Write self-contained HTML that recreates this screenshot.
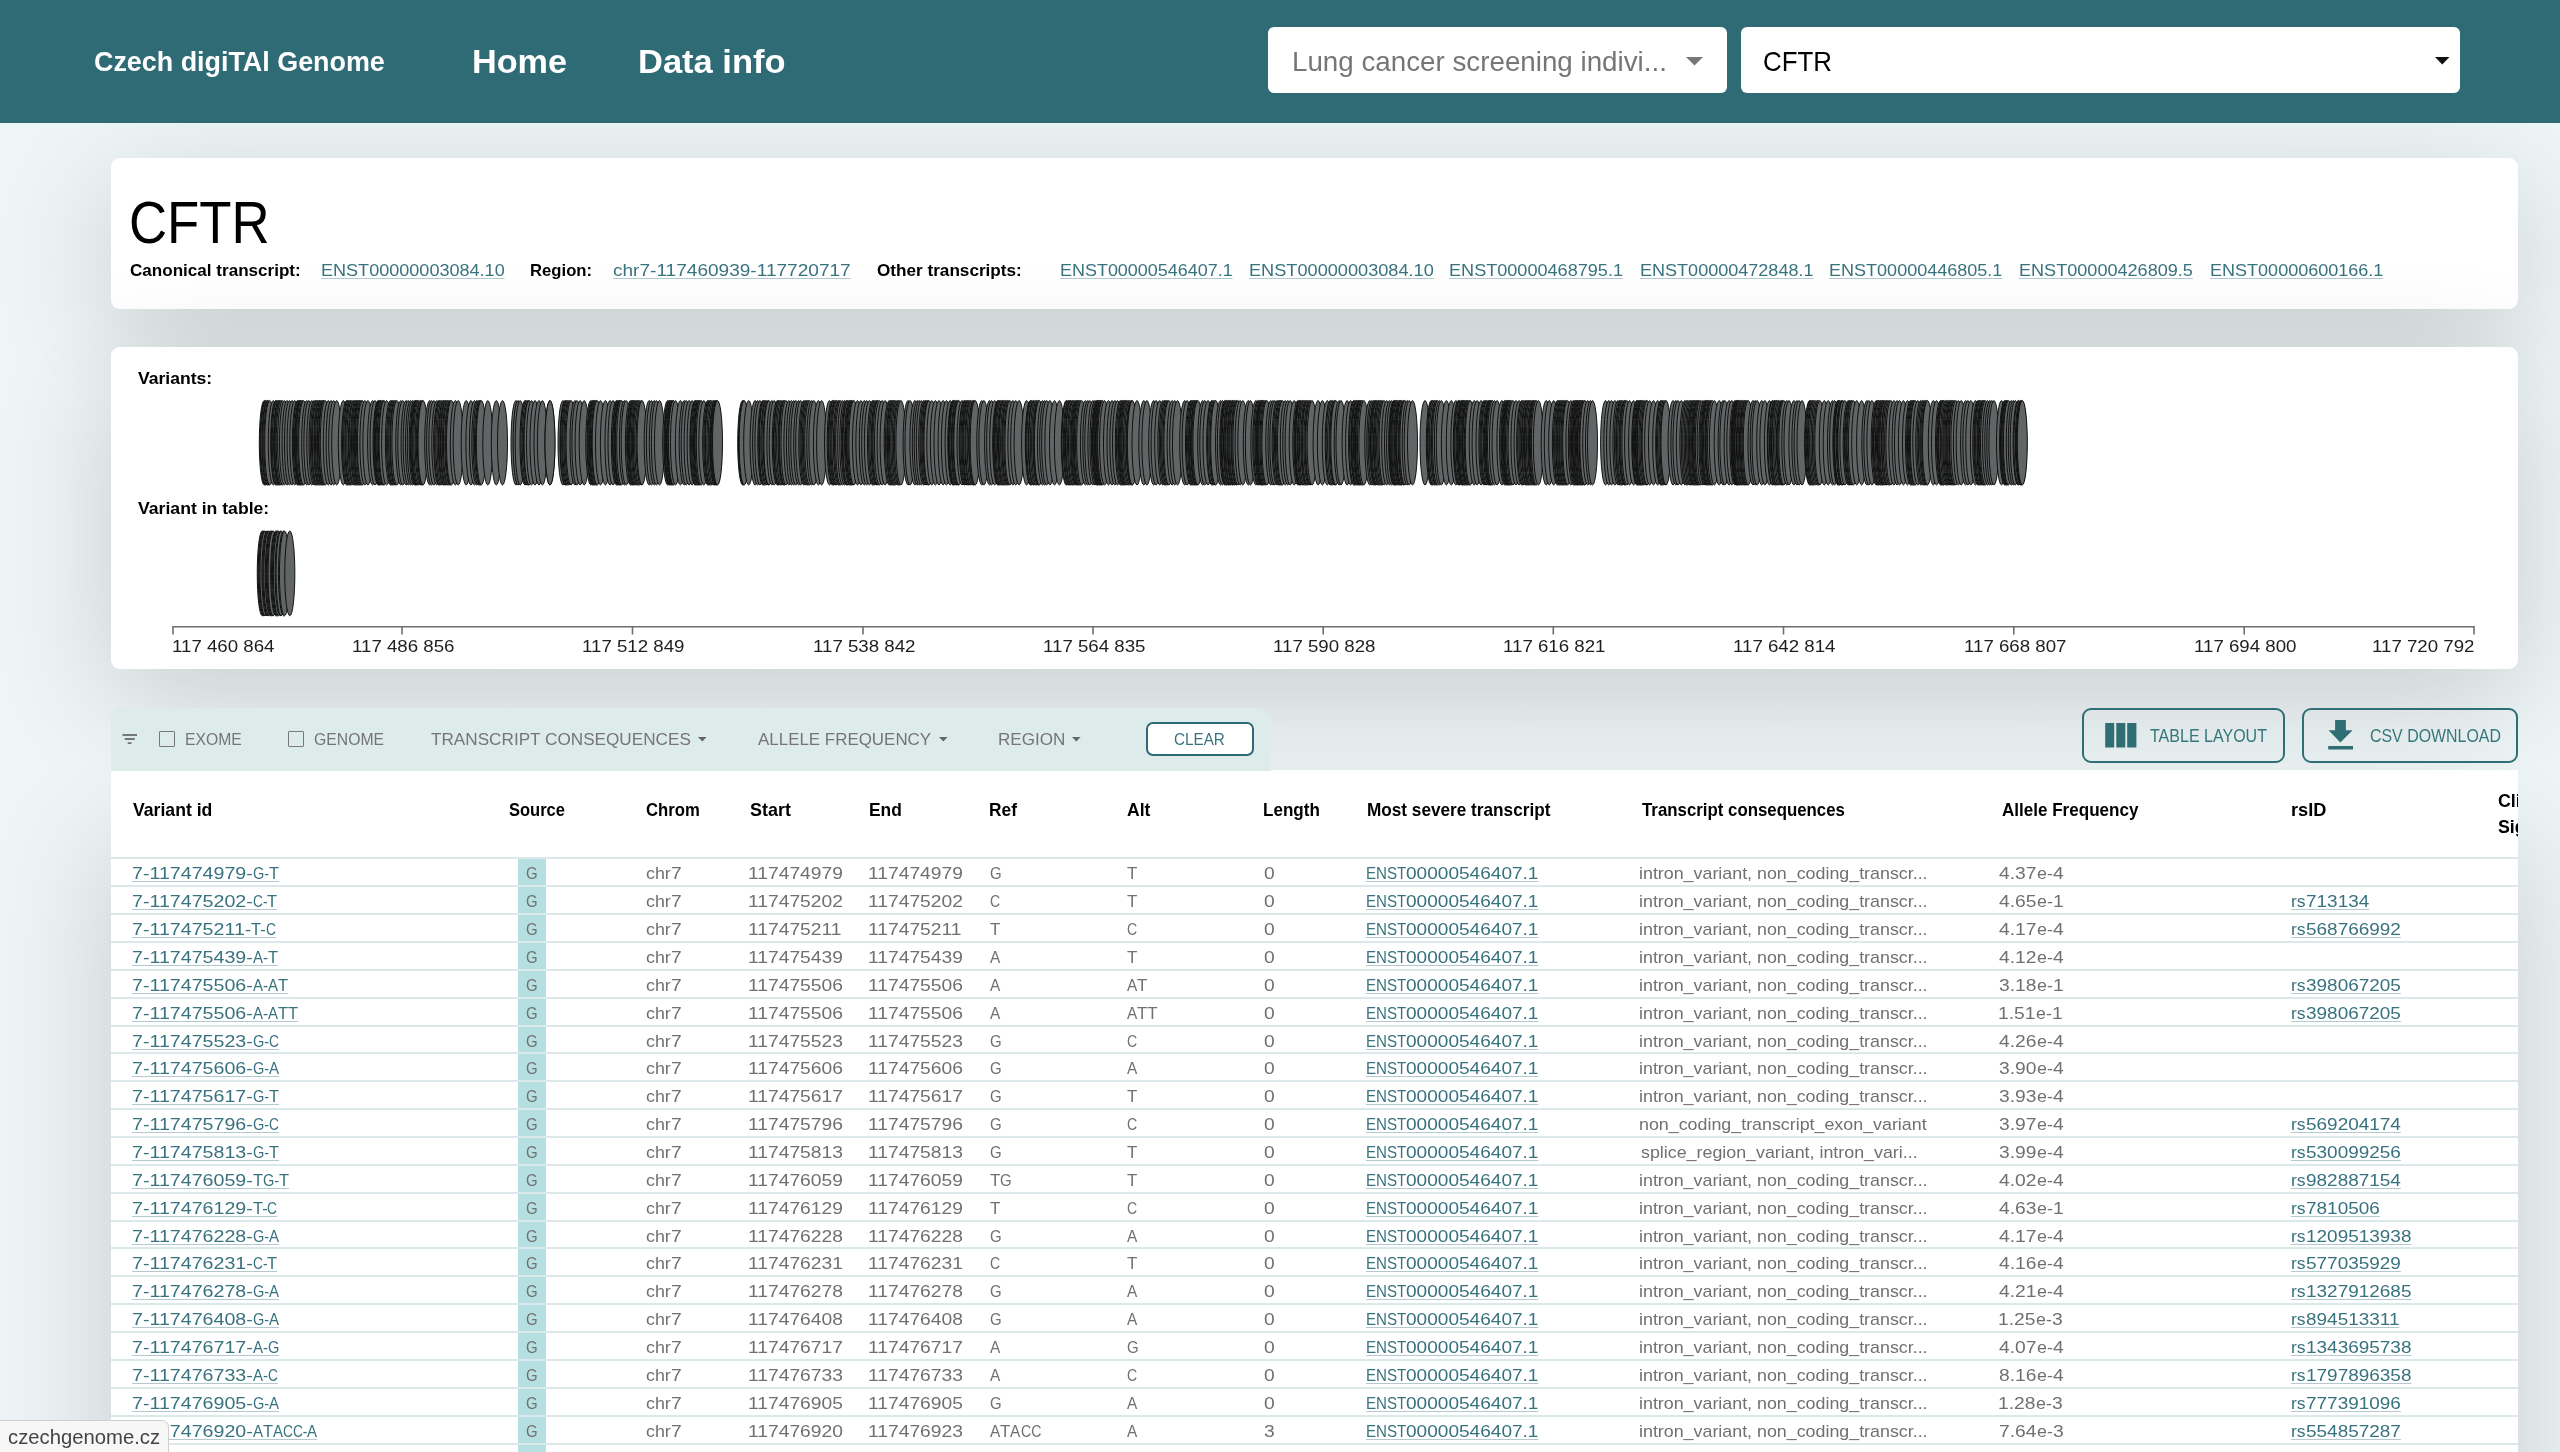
<!DOCTYPE html>
<html lang="en"><head><meta charset="utf-8"><title>Czech digiTAl Genome - CFTR</title>
<style>
*{box-sizing:border-box;margin:0;padding:0}
html,body{width:2560px;height:1452px;overflow:hidden}
html{background:#eef5f7}
body{font-family:"Liberation Sans",sans-serif;position:relative;will-change:transform}
.t{position:absolute;white-space:nowrap;line-height:1;transform-origin:0 0;display:block;text-decoration:none}
.u{text-decoration:underline;text-decoration-color:#b2cacf;text-decoration-thickness:1px;text-underline-offset:1.8px}
.abs{position:absolute}
header{position:absolute;left:0;top:0;width:2560px;height:122.6px;background:#2f6b75;z-index:5}
.sel{position:absolute;top:27px;height:66px;background:#fff;border-radius:6px}
.card{position:absolute;left:111px;width:2407px;background:#fff;border-radius:9px;box-shadow:0 30px 120px rgba(0,0,0,.16)}
.fbar{position:absolute;left:111px;top:707.5px;width:1160px;height:63px;background:#deebeb;border-radius:9px 16px 0 0;z-index:2}
.tbl{position:absolute;left:111px;top:770px;width:2407px;height:900px;background:#fff;box-shadow:0 70px 120px rgba(0,0,0,.16);overflow:hidden}
.btn{position:absolute;top:708px;height:55px;border:2px solid #2f6e74;border-radius:9px;z-index:2}
.cb{position:absolute;top:731px;width:16px;height:16px;border:1.7px solid #787878;border-radius:1px}
.rl{position:absolute;left:0;width:2407px;height:2px;background:#dce9ea}
.g{position:absolute;left:407px;width:28px;background:#b6dfe2}
.tip{position:absolute;left:-1px;top:1420px;width:170px;height:40px;background:#f7f7f7;border:1px solid #cfcfcf;border-radius:0 7px 0 0;z-index:10}
</style></head><body>

<main>
<section class="card" style="top:158px;height:151px">
</section>
<section class="card" style="top:347.3px;height:322px">
</section>
<section class="tbl"></section>
</main>
<header>
<span class="t" style="left:93.85px;top:46.90px;font-size:28.4px;color:#fff;font-weight:700;transform:scaleX(0.9470);">Czech digiTAl Genome</span>
<span class="t" style="left:471.97px;top:45.10px;font-size:33.8px;color:#fff;font-weight:700;transform:scaleX(1.0126);">Home</span>
<span class="t" style="left:637.66px;top:45.10px;font-size:33.8px;color:#fff;font-weight:700;transform:scaleX(1.0202);">Data info</span>
<div class="sel" style="left:1268px;width:458.7px">
<svg class="abs" style="left:417.5px;top:29.7px" width="17" height="9" viewBox="0 0 17 9"><path d="M0 0h17L8.5 8.5z" fill="#777"/></svg>
</div>
<div class="sel" style="left:1741.2px;width:719.3px">
<svg class="abs" style="left:694px;top:29.7px" width="14.5" height="8" viewBox="0 0 14.5 8"><path d="M0 0h14.5L7.25 7.6z" fill="#111"/></svg>
</div>
<span class="t" style="left:1291.71px;top:47.75px;font-size:27.2px;color:#767676;transform:scaleX(1.0208);">Lung cancer screening indivi...</span>
<span class="t" style="left:1762.80px;top:47.75px;font-size:27.2px;color:#000;transform:scaleX(0.9527);">CFTR</span>
</header>
<div id="gene">
<span class="t" style="left:129.45px;top:194.25px;font-size:58.7px;color:#000;transform:scaleX(0.8992);">CFTR</span>
<span class="t" style="left:130.00px;top:262.00px;font-size:17.3px;color:#000;font-weight:700;transform:scaleX(0.9878);">Canonical transcript:</span>
<a class="t u" style="left:320.71px;top:262.00px;font-size:17.3px;color:#38727e;transform:scaleX(1.0446);">ENST00000003084.10</a>
<span class="t" style="left:530.29px;top:262.00px;font-size:17.3px;color:#000;font-weight:700;transform:scaleX(0.9647);">Region:</span>
<a class="t u" style="left:613.00px;top:262.00px;font-size:17.3px;color:#38727e;transform:scaleX(1.1026);">chr7-117460939-117720717</a>
<span class="t" style="left:877.00px;top:262.00px;font-size:17.3px;color:#000;font-weight:700;transform:scaleX(0.9917);">Other transcripts:</span>
<a class="t u" style="left:1059.96px;top:262.00px;font-size:17.3px;color:#38727e;transform:scaleX(1.0388);">ENST00000546407.1</a>
<a class="t u" style="left:1249.25px;top:262.00px;font-size:17.3px;color:#38727e;transform:scaleX(1.0510);">ENST00000003084.10</a>
<a class="t u" style="left:1449.35px;top:262.00px;font-size:17.3px;color:#38727e;transform:scaleX(1.0467);">ENST00000468795.1</a>
<a class="t u" style="left:1639.66px;top:262.00px;font-size:17.3px;color:#38727e;transform:scaleX(1.0437);">ENST00000472848.1</a>
<a class="t u" style="left:1829.46px;top:262.00px;font-size:17.3px;color:#38727e;transform:scaleX(1.0431);">ENST00000446805.1</a>
<a class="t u" style="left:2019.25px;top:262.00px;font-size:17.3px;color:#38727e;transform:scaleX(1.0461);">ENST00000426809.5</a>
<a class="t u" style="left:2209.56px;top:262.00px;font-size:17.3px;color:#38727e;transform:scaleX(1.0431);">ENST00000600166.1</a>
</div>
<div id="plot">
<span class="t" style="left:138.30px;top:369.50px;font-size:16.2px;color:#000;font-weight:700;transform:scaleX(1.0853);">Variants:</span>
<span class="t" style="left:138.30px;top:500.20px;font-size:16.2px;color:#000;font-weight:700;transform:scaleX(1.0886);">Variant in table:</span>
<svg class="abs" style="left:0;top:340px" width="2560" height="330" viewBox="0 340 2560 330"><g fill="#626566" stroke="#0c0c0c" stroke-width=".95"><ellipse cx="264.3" cy="442.8" rx="5" ry="42.2"/><ellipse cx="265.2" cy="442.8" rx="5" ry="42.2"/><ellipse cx="265.9" cy="442.8" rx="5" ry="42.2"/><ellipse cx="267.1" cy="442.8" rx="5" ry="42.2"/><ellipse cx="267.7" cy="442.8" rx="5" ry="42.2"/><ellipse cx="268.8" cy="442.8" rx="5" ry="42.2"/><ellipse cx="269.7" cy="442.8" rx="5" ry="42.2"/><ellipse cx="273.3" cy="442.8" rx="5" ry="42.2"/><ellipse cx="275.7" cy="442.8" rx="5" ry="42.2"/><ellipse cx="276.3" cy="442.8" rx="5" ry="42.2"/><ellipse cx="277.3" cy="442.8" rx="5" ry="42.2"/><ellipse cx="278.6" cy="442.8" rx="5" ry="42.2"/><ellipse cx="279.3" cy="442.8" rx="5" ry="42.2"/><ellipse cx="280.1" cy="442.8" rx="5" ry="42.2"/><ellipse cx="281.2" cy="442.8" rx="5" ry="42.2"/><ellipse cx="282.6" cy="442.8" rx="5" ry="42.2"/><ellipse cx="284.5" cy="442.8" rx="5" ry="42.2"/><ellipse cx="287.1" cy="442.8" rx="5" ry="42.2"/><ellipse cx="289.5" cy="442.8" rx="5" ry="42.2"/><ellipse cx="292.1" cy="442.8" rx="5" ry="42.2"/><ellipse cx="294.8" cy="442.8" rx="5" ry="42.2"/><ellipse cx="297.4" cy="442.8" rx="5" ry="42.2"/><ellipse cx="298.3" cy="442.8" rx="5" ry="42.2"/><ellipse cx="299.4" cy="442.8" rx="5" ry="42.2"/><ellipse cx="300.1" cy="442.8" rx="5" ry="42.2"/><ellipse cx="300.7" cy="442.8" rx="5" ry="42.2"/><ellipse cx="301.5" cy="442.8" rx="5" ry="42.2"/><ellipse cx="302.7" cy="442.8" rx="5" ry="42.2"/><ellipse cx="303.6" cy="442.8" rx="5" ry="42.2"/><ellipse cx="306.7" cy="442.8" rx="5" ry="42.2"/><ellipse cx="308.9" cy="442.8" rx="5" ry="42.2"/><ellipse cx="311.8" cy="442.8" rx="5" ry="42.2"/><ellipse cx="314.0" cy="442.8" rx="5" ry="42.2"/><ellipse cx="315.3" cy="442.8" rx="5" ry="42.2"/><ellipse cx="316.5" cy="442.8" rx="5" ry="42.2"/><ellipse cx="317.4" cy="442.8" rx="5" ry="42.2"/><ellipse cx="318.8" cy="442.8" rx="5" ry="42.2"/><ellipse cx="319.5" cy="442.8" rx="5" ry="42.2"/><ellipse cx="320.5" cy="442.8" rx="5" ry="42.2"/><ellipse cx="321.7" cy="442.8" rx="5" ry="42.2"/><ellipse cx="322.4" cy="442.8" rx="5" ry="42.2"/><ellipse cx="323.5" cy="442.8" rx="5" ry="42.2"/><ellipse cx="324.1" cy="442.8" rx="5" ry="42.2"/><ellipse cx="325.3" cy="442.8" rx="5" ry="42.2"/><ellipse cx="328.3" cy="442.8" rx="5" ry="42.2"/><ellipse cx="331.1" cy="442.8" rx="5" ry="42.2"/><ellipse cx="333.7" cy="442.8" rx="5" ry="42.2"/><ellipse cx="336.7" cy="442.8" rx="5" ry="42.2"/><ellipse cx="343.3" cy="442.8" rx="5" ry="42.2"/><ellipse cx="346.6" cy="442.8" rx="5" ry="42.2"/><ellipse cx="347.5" cy="442.8" rx="5" ry="42.2"/><ellipse cx="348.6" cy="442.8" rx="5" ry="42.2"/><ellipse cx="349.8" cy="442.8" rx="5" ry="42.2"/><ellipse cx="350.7" cy="442.8" rx="5" ry="42.2"/><ellipse cx="351.9" cy="442.8" rx="5" ry="42.2"/><ellipse cx="353.3" cy="442.8" rx="5" ry="42.2"/><ellipse cx="354.2" cy="442.8" rx="5" ry="42.2"/><ellipse cx="355.6" cy="442.8" rx="5" ry="42.2"/><ellipse cx="356.5" cy="442.8" rx="5" ry="42.2"/><ellipse cx="357.6" cy="442.8" rx="5" ry="42.2"/><ellipse cx="358.6" cy="442.8" rx="5" ry="42.2"/><ellipse cx="359.4" cy="442.8" rx="5" ry="42.2"/><ellipse cx="360.3" cy="442.8" rx="5" ry="42.2"/><ellipse cx="361.5" cy="442.8" rx="5" ry="42.2"/><ellipse cx="362.4" cy="442.8" rx="5" ry="42.2"/><ellipse cx="364.9" cy="442.8" rx="5" ry="42.2"/><ellipse cx="367.9" cy="442.8" rx="5" ry="42.2"/><ellipse cx="372.6" cy="442.8" rx="5" ry="42.2"/><ellipse cx="375.0" cy="442.8" rx="5" ry="42.2"/><ellipse cx="378.1" cy="442.8" rx="5" ry="42.2"/><ellipse cx="378.8" cy="442.8" rx="5" ry="42.2"/><ellipse cx="379.5" cy="442.8" rx="5" ry="42.2"/><ellipse cx="380.3" cy="442.8" rx="5" ry="42.2"/><ellipse cx="381.1" cy="442.8" rx="5" ry="42.2"/><ellipse cx="382.2" cy="442.8" rx="5" ry="42.2"/><ellipse cx="383.3" cy="442.8" rx="5" ry="42.2"/><ellipse cx="384.1" cy="442.8" rx="5" ry="42.2"/><ellipse cx="386.6" cy="442.8" rx="5" ry="42.2"/><ellipse cx="390.4" cy="442.8" rx="5" ry="42.2"/><ellipse cx="391.6" cy="442.8" rx="5" ry="42.2"/><ellipse cx="392.6" cy="442.8" rx="5" ry="42.2"/><ellipse cx="393.7" cy="442.8" rx="5" ry="42.2"/><ellipse cx="394.9" cy="442.8" rx="5" ry="42.2"/><ellipse cx="395.6" cy="442.8" rx="5" ry="42.2"/><ellipse cx="396.9" cy="442.8" rx="5" ry="42.2"/><ellipse cx="400.8" cy="442.8" rx="5" ry="42.2"/><ellipse cx="402.8" cy="442.8" rx="5" ry="42.2"/><ellipse cx="406.1" cy="442.8" rx="5" ry="42.2"/><ellipse cx="408.2" cy="442.8" rx="5" ry="42.2"/><ellipse cx="410.5" cy="442.8" rx="5" ry="42.2"/><ellipse cx="412.3" cy="442.8" rx="5" ry="42.2"/><ellipse cx="414.2" cy="442.8" rx="5" ry="42.2"/><ellipse cx="415.3" cy="442.8" rx="5" ry="42.2"/><ellipse cx="416.0" cy="442.8" rx="5" ry="42.2"/><ellipse cx="416.8" cy="442.8" rx="5" ry="42.2"/><ellipse cx="417.7" cy="442.8" rx="5" ry="42.2"/><ellipse cx="418.8" cy="442.8" rx="5" ry="42.2"/><ellipse cx="420.2" cy="442.8" rx="5" ry="42.2"/><ellipse cx="421.3" cy="442.8" rx="5" ry="42.2"/><ellipse cx="422.4" cy="442.8" rx="5" ry="42.2"/><ellipse cx="423.0" cy="442.8" rx="5" ry="42.2"/><ellipse cx="429.7" cy="442.8" rx="5" ry="42.2"/><ellipse cx="431.6" cy="442.8" rx="5" ry="42.2"/><ellipse cx="433.9" cy="442.8" rx="5" ry="42.2"/><ellipse cx="436.8" cy="442.8" rx="5" ry="42.2"/><ellipse cx="438.7" cy="442.8" rx="5" ry="42.2"/><ellipse cx="439.6" cy="442.8" rx="5" ry="42.2"/><ellipse cx="440.8" cy="442.8" rx="5" ry="42.2"/><ellipse cx="442.1" cy="442.8" rx="5" ry="42.2"/><ellipse cx="443.4" cy="442.8" rx="5" ry="42.2"/><ellipse cx="444.2" cy="442.8" rx="5" ry="42.2"/><ellipse cx="445.4" cy="442.8" rx="5" ry="42.2"/><ellipse cx="446.1" cy="442.8" rx="5" ry="42.2"/><ellipse cx="447.4" cy="442.8" rx="5" ry="42.2"/><ellipse cx="448.4" cy="442.8" rx="5" ry="42.2"/><ellipse cx="449.8" cy="442.8" rx="5" ry="42.2"/><ellipse cx="450.7" cy="442.8" rx="5" ry="42.2"/><ellipse cx="451.5" cy="442.8" rx="5" ry="42.2"/><ellipse cx="455.3" cy="442.8" rx="5" ry="42.2"/><ellipse cx="458.2" cy="442.8" rx="5" ry="42.2"/><ellipse cx="466.2" cy="442.8" rx="5" ry="42.2"/><ellipse cx="470.9" cy="442.8" rx="5" ry="42.2"/><ellipse cx="474.5" cy="442.8" rx="5" ry="42.2"/><ellipse cx="476.8" cy="442.8" rx="5" ry="42.2"/><ellipse cx="478.2" cy="442.8" rx="5" ry="42.2"/><ellipse cx="479.5" cy="442.8" rx="5" ry="42.2"/><ellipse cx="480.5" cy="442.8" rx="5" ry="42.2"/><ellipse cx="481.3" cy="442.8" rx="5" ry="42.2"/><ellipse cx="487.8" cy="442.8" rx="5" ry="42.2"/><ellipse cx="496.3" cy="442.8" rx="5" ry="42.2"/><ellipse cx="502.5" cy="442.8" rx="5" ry="42.2"/><ellipse cx="516.0" cy="442.8" rx="5" ry="42.2"/><ellipse cx="518.1" cy="442.8" rx="5" ry="42.2"/><ellipse cx="520.2" cy="442.8" rx="5" ry="42.2"/><ellipse cx="525.0" cy="442.8" rx="5" ry="42.2"/><ellipse cx="526.0" cy="442.8" rx="5" ry="42.2"/><ellipse cx="527.2" cy="442.8" rx="5" ry="42.2"/><ellipse cx="528.5" cy="442.8" rx="5" ry="42.2"/><ellipse cx="529.1" cy="442.8" rx="5" ry="42.2"/><ellipse cx="531.5" cy="442.8" rx="5" ry="42.2"/><ellipse cx="535.0" cy="442.8" rx="5" ry="42.2"/><ellipse cx="539.0" cy="442.8" rx="5" ry="42.2"/><ellipse cx="542.4" cy="442.8" rx="5" ry="42.2"/><ellipse cx="549.9" cy="442.8" rx="5" ry="42.2"/><ellipse cx="550.0" cy="442.8" rx="5" ry="42.2"/><ellipse cx="563.0" cy="442.8" rx="5" ry="42.2"/><ellipse cx="565.0" cy="442.8" rx="5" ry="42.2"/><ellipse cx="565.6" cy="442.8" rx="5" ry="42.2"/><ellipse cx="566.7" cy="442.8" rx="5" ry="42.2"/><ellipse cx="567.7" cy="442.8" rx="5" ry="42.2"/><ellipse cx="568.9" cy="442.8" rx="5" ry="42.2"/><ellipse cx="570.0" cy="442.8" rx="5" ry="42.2"/><ellipse cx="571.1" cy="442.8" rx="5" ry="42.2"/><ellipse cx="575.0" cy="442.8" rx="5" ry="42.2"/><ellipse cx="576.9" cy="442.8" rx="5" ry="42.2"/><ellipse cx="580.1" cy="442.8" rx="5" ry="42.2"/><ellipse cx="584.2" cy="442.8" rx="5" ry="42.2"/><ellipse cx="590.8" cy="442.8" rx="5" ry="42.2"/><ellipse cx="592.1" cy="442.8" rx="5" ry="42.2"/><ellipse cx="592.8" cy="442.8" rx="5" ry="42.2"/><ellipse cx="593.7" cy="442.8" rx="5" ry="42.2"/><ellipse cx="594.5" cy="442.8" rx="5" ry="42.2"/><ellipse cx="595.3" cy="442.8" rx="5" ry="42.2"/><ellipse cx="596.4" cy="442.8" rx="5" ry="42.2"/><ellipse cx="597.2" cy="442.8" rx="5" ry="42.2"/><ellipse cx="600.5" cy="442.8" rx="5" ry="42.2"/><ellipse cx="605.4" cy="442.8" rx="5" ry="42.2"/><ellipse cx="610.0" cy="442.8" rx="5" ry="42.2"/><ellipse cx="613.0" cy="442.8" rx="5" ry="42.2"/><ellipse cx="616.4" cy="442.8" rx="5" ry="42.2"/><ellipse cx="617.5" cy="442.8" rx="5" ry="42.2"/><ellipse cx="618.1" cy="442.8" rx="5" ry="42.2"/><ellipse cx="619.1" cy="442.8" rx="5" ry="42.2"/><ellipse cx="619.8" cy="442.8" rx="5" ry="42.2"/><ellipse cx="620.4" cy="442.8" rx="5" ry="42.2"/><ellipse cx="621.7" cy="442.8" rx="5" ry="42.2"/><ellipse cx="624.4" cy="442.8" rx="5" ry="42.2"/><ellipse cx="626.2" cy="442.8" rx="5" ry="42.2"/><ellipse cx="630.4" cy="442.8" rx="5" ry="42.2"/><ellipse cx="631.7" cy="442.8" rx="5" ry="42.2"/><ellipse cx="632.4" cy="442.8" rx="5" ry="42.2"/><ellipse cx="633.4" cy="442.8" rx="5" ry="42.2"/><ellipse cx="634.2" cy="442.8" rx="5" ry="42.2"/><ellipse cx="635.1" cy="442.8" rx="5" ry="42.2"/><ellipse cx="636.3" cy="442.8" rx="5" ry="42.2"/><ellipse cx="637.4" cy="442.8" rx="5" ry="42.2"/><ellipse cx="638.4" cy="442.8" rx="5" ry="42.2"/><ellipse cx="639.7" cy="442.8" rx="5" ry="42.2"/><ellipse cx="641.1" cy="442.8" rx="5" ry="42.2"/><ellipse cx="642.0" cy="442.8" rx="5" ry="42.2"/><ellipse cx="649.2" cy="442.8" rx="5" ry="42.2"/><ellipse cx="651.4" cy="442.8" rx="5" ry="42.2"/><ellipse cx="654.3" cy="442.8" rx="5" ry="42.2"/><ellipse cx="656.4" cy="442.8" rx="5" ry="42.2"/><ellipse cx="659.5" cy="442.8" rx="5" ry="42.2"/><ellipse cx="667.7" cy="442.8" rx="5" ry="42.2"/><ellipse cx="669.0" cy="442.8" rx="5" ry="42.2"/><ellipse cx="669.7" cy="442.8" rx="5" ry="42.2"/><ellipse cx="670.4" cy="442.8" rx="5" ry="42.2"/><ellipse cx="671.4" cy="442.8" rx="5" ry="42.2"/><ellipse cx="672.1" cy="442.8" rx="5" ry="42.2"/><ellipse cx="672.9" cy="442.8" rx="5" ry="42.2"/><ellipse cx="673.5" cy="442.8" rx="5" ry="42.2"/><ellipse cx="675.5" cy="442.8" rx="5" ry="42.2"/><ellipse cx="680.4" cy="442.8" rx="5" ry="42.2"/><ellipse cx="684.2" cy="442.8" rx="5" ry="42.2"/><ellipse cx="686.2" cy="442.8" rx="5" ry="42.2"/><ellipse cx="689.1" cy="442.8" rx="5" ry="42.2"/><ellipse cx="692.1" cy="442.8" rx="5" ry="42.2"/><ellipse cx="694.9" cy="442.8" rx="5" ry="42.2"/><ellipse cx="695.6" cy="442.8" rx="5" ry="42.2"/><ellipse cx="696.6" cy="442.8" rx="5" ry="42.2"/><ellipse cx="697.6" cy="442.8" rx="5" ry="42.2"/><ellipse cx="698.5" cy="442.8" rx="5" ry="42.2"/><ellipse cx="699.3" cy="442.8" rx="5" ry="42.2"/><ellipse cx="700.1" cy="442.8" rx="5" ry="42.2"/><ellipse cx="701.3" cy="442.8" rx="5" ry="42.2"/><ellipse cx="703.8" cy="442.8" rx="5" ry="42.2"/><ellipse cx="707.7" cy="442.8" rx="5" ry="42.2"/><ellipse cx="708.8" cy="442.8" rx="5" ry="42.2"/><ellipse cx="709.8" cy="442.8" rx="5" ry="42.2"/><ellipse cx="710.5" cy="442.8" rx="5" ry="42.2"/><ellipse cx="711.9" cy="442.8" rx="5" ry="42.2"/><ellipse cx="713.2" cy="442.8" rx="5" ry="42.2"/><ellipse cx="714.6" cy="442.8" rx="5" ry="42.2"/><ellipse cx="715.3" cy="442.8" rx="5" ry="42.2"/><ellipse cx="716.1" cy="442.8" rx="5" ry="42.2"/><ellipse cx="716.8" cy="442.8" rx="5" ry="42.2"/><ellipse cx="717.5" cy="442.8" rx="5" ry="42.2"/><ellipse cx="742.7" cy="442.8" rx="5" ry="42.2"/><ellipse cx="743.5" cy="442.8" rx="5" ry="42.2"/><ellipse cx="744.2" cy="442.8" rx="5" ry="42.2"/><ellipse cx="748.7" cy="442.8" rx="5" ry="42.2"/><ellipse cx="755.1" cy="442.8" rx="5" ry="42.2"/><ellipse cx="757.6" cy="442.8" rx="5" ry="42.2"/><ellipse cx="759.9" cy="442.8" rx="5" ry="42.2"/><ellipse cx="762.8" cy="442.8" rx="5" ry="42.2"/><ellipse cx="763.7" cy="442.8" rx="5" ry="42.2"/><ellipse cx="764.4" cy="442.8" rx="5" ry="42.2"/><ellipse cx="765.8" cy="442.8" rx="5" ry="42.2"/><ellipse cx="766.9" cy="442.8" rx="5" ry="42.2"/><ellipse cx="768.2" cy="442.8" rx="5" ry="42.2"/><ellipse cx="768.9" cy="442.8" rx="5" ry="42.2"/><ellipse cx="771.9" cy="442.8" rx="5" ry="42.2"/><ellipse cx="774.2" cy="442.8" rx="5" ry="42.2"/><ellipse cx="777.3" cy="442.8" rx="5" ry="42.2"/><ellipse cx="778.4" cy="442.8" rx="5" ry="42.2"/><ellipse cx="779.0" cy="442.8" rx="5" ry="42.2"/><ellipse cx="780.2" cy="442.8" rx="5" ry="42.2"/><ellipse cx="781.6" cy="442.8" rx="5" ry="42.2"/><ellipse cx="783.1" cy="442.8" rx="5" ry="42.2"/><ellipse cx="783.9" cy="442.8" rx="5" ry="42.2"/><ellipse cx="784.6" cy="442.8" rx="5" ry="42.2"/><ellipse cx="786.0" cy="442.8" rx="5" ry="42.2"/><ellipse cx="788.9" cy="442.8" rx="5" ry="42.2"/><ellipse cx="791.4" cy="442.8" rx="5" ry="42.2"/><ellipse cx="793.7" cy="442.8" rx="5" ry="42.2"/><ellipse cx="795.8" cy="442.8" rx="5" ry="42.2"/><ellipse cx="798.7" cy="442.8" rx="5" ry="42.2"/><ellipse cx="800.7" cy="442.8" rx="5" ry="42.2"/><ellipse cx="803.8" cy="442.8" rx="5" ry="42.2"/><ellipse cx="805.0" cy="442.8" rx="5" ry="42.2"/><ellipse cx="806.1" cy="442.8" rx="5" ry="42.2"/><ellipse cx="807.3" cy="442.8" rx="5" ry="42.2"/><ellipse cx="808.4" cy="442.8" rx="5" ry="42.2"/><ellipse cx="809.7" cy="442.8" rx="5" ry="42.2"/><ellipse cx="811.8" cy="442.8" rx="5" ry="42.2"/><ellipse cx="813.9" cy="442.8" rx="5" ry="42.2"/><ellipse cx="818.4" cy="442.8" rx="5" ry="42.2"/><ellipse cx="821.6" cy="442.8" rx="5" ry="42.2"/><ellipse cx="829.5" cy="442.8" rx="5" ry="42.2"/><ellipse cx="832.2" cy="442.8" rx="5" ry="42.2"/><ellipse cx="833.2" cy="442.8" rx="5" ry="42.2"/><ellipse cx="833.8" cy="442.8" rx="5" ry="42.2"/><ellipse cx="835.0" cy="442.8" rx="5" ry="42.2"/><ellipse cx="835.9" cy="442.8" rx="5" ry="42.2"/><ellipse cx="836.9" cy="442.8" rx="5" ry="42.2"/><ellipse cx="838.4" cy="442.8" rx="5" ry="42.2"/><ellipse cx="839.5" cy="442.8" rx="5" ry="42.2"/><ellipse cx="840.7" cy="442.8" rx="5" ry="42.2"/><ellipse cx="842.7" cy="442.8" rx="5" ry="42.2"/><ellipse cx="844.8" cy="442.8" rx="5" ry="42.2"/><ellipse cx="846.3" cy="442.8" rx="5" ry="42.2"/><ellipse cx="847.3" cy="442.8" rx="5" ry="42.2"/><ellipse cx="848.1" cy="442.8" rx="5" ry="42.2"/><ellipse cx="849.6" cy="442.8" rx="5" ry="42.2"/><ellipse cx="850.4" cy="442.8" rx="5" ry="42.2"/><ellipse cx="851.3" cy="442.8" rx="5" ry="42.2"/><ellipse cx="851.9" cy="442.8" rx="5" ry="42.2"/><ellipse cx="852.9" cy="442.8" rx="5" ry="42.2"/><ellipse cx="853.9" cy="442.8" rx="5" ry="42.2"/><ellipse cx="857.5" cy="442.8" rx="5" ry="42.2"/><ellipse cx="860.9" cy="442.8" rx="5" ry="42.2"/><ellipse cx="864.3" cy="442.8" rx="5" ry="42.2"/><ellipse cx="866.7" cy="442.8" rx="5" ry="42.2"/><ellipse cx="869.4" cy="442.8" rx="5" ry="42.2"/><ellipse cx="872.5" cy="442.8" rx="5" ry="42.2"/><ellipse cx="873.7" cy="442.8" rx="5" ry="42.2"/><ellipse cx="874.9" cy="442.8" rx="5" ry="42.2"/><ellipse cx="876.2" cy="442.8" rx="5" ry="42.2"/><ellipse cx="877.1" cy="442.8" rx="5" ry="42.2"/><ellipse cx="878.0" cy="442.8" rx="5" ry="42.2"/><ellipse cx="879.5" cy="442.8" rx="5" ry="42.2"/><ellipse cx="882.1" cy="442.8" rx="5" ry="42.2"/><ellipse cx="885.1" cy="442.8" rx="5" ry="42.2"/><ellipse cx="889.2" cy="442.8" rx="5" ry="42.2"/><ellipse cx="890.4" cy="442.8" rx="5" ry="42.2"/><ellipse cx="891.7" cy="442.8" rx="5" ry="42.2"/><ellipse cx="892.4" cy="442.8" rx="5" ry="42.2"/><ellipse cx="893.5" cy="442.8" rx="5" ry="42.2"/><ellipse cx="894.5" cy="442.8" rx="5" ry="42.2"/><ellipse cx="895.8" cy="442.8" rx="5" ry="42.2"/><ellipse cx="897.1" cy="442.8" rx="5" ry="42.2"/><ellipse cx="898.4" cy="442.8" rx="5" ry="42.2"/><ellipse cx="899.5" cy="442.8" rx="5" ry="42.2"/><ellipse cx="900.9" cy="442.8" rx="5" ry="42.2"/><ellipse cx="908.1" cy="442.8" rx="5" ry="42.2"/><ellipse cx="910.0" cy="442.8" rx="5" ry="42.2"/><ellipse cx="914.9" cy="442.8" rx="5" ry="42.2"/><ellipse cx="917.3" cy="442.8" rx="5" ry="42.2"/><ellipse cx="919.2" cy="442.8" rx="5" ry="42.2"/><ellipse cx="921.3" cy="442.8" rx="5" ry="42.2"/><ellipse cx="923.7" cy="442.8" rx="5" ry="42.2"/><ellipse cx="925.0" cy="442.8" rx="5" ry="42.2"/><ellipse cx="926.0" cy="442.8" rx="5" ry="42.2"/><ellipse cx="927.1" cy="442.8" rx="5" ry="42.2"/><ellipse cx="928.2" cy="442.8" rx="5" ry="42.2"/><ellipse cx="928.9" cy="442.8" rx="5" ry="42.2"/><ellipse cx="931.8" cy="442.8" rx="5" ry="42.2"/><ellipse cx="935.4" cy="442.8" rx="5" ry="42.2"/><ellipse cx="939.0" cy="442.8" rx="5" ry="42.2"/><ellipse cx="943.1" cy="442.8" rx="5" ry="42.2"/><ellipse cx="946.4" cy="442.8" rx="5" ry="42.2"/><ellipse cx="950.1" cy="442.8" rx="5" ry="42.2"/><ellipse cx="952.8" cy="442.8" rx="5" ry="42.2"/><ellipse cx="953.5" cy="442.8" rx="5" ry="42.2"/><ellipse cx="954.2" cy="442.8" rx="5" ry="42.2"/><ellipse cx="955.0" cy="442.8" rx="5" ry="42.2"/><ellipse cx="956.3" cy="442.8" rx="5" ry="42.2"/><ellipse cx="957.1" cy="442.8" rx="5" ry="42.2"/><ellipse cx="958.2" cy="442.8" rx="5" ry="42.2"/><ellipse cx="958.8" cy="442.8" rx="5" ry="42.2"/><ellipse cx="962.0" cy="442.8" rx="5" ry="42.2"/><ellipse cx="964.1" cy="442.8" rx="5" ry="42.2"/><ellipse cx="964.9" cy="442.8" rx="5" ry="42.2"/><ellipse cx="966.0" cy="442.8" rx="5" ry="42.2"/><ellipse cx="967.0" cy="442.8" rx="5" ry="42.2"/><ellipse cx="967.9" cy="442.8" rx="5" ry="42.2"/><ellipse cx="968.7" cy="442.8" rx="5" ry="42.2"/><ellipse cx="970.0" cy="442.8" rx="5" ry="42.2"/><ellipse cx="970.8" cy="442.8" rx="5" ry="42.2"/><ellipse cx="972.2" cy="442.8" rx="5" ry="42.2"/><ellipse cx="973.6" cy="442.8" rx="5" ry="42.2"/><ellipse cx="974.2" cy="442.8" rx="5" ry="42.2"/><ellipse cx="975.2" cy="442.8" rx="5" ry="42.2"/><ellipse cx="981.8" cy="442.8" rx="5" ry="42.2"/><ellipse cx="983.9" cy="442.8" rx="5" ry="42.2"/><ellipse cx="989.6" cy="442.8" rx="5" ry="42.2"/><ellipse cx="991.6" cy="442.8" rx="5" ry="42.2"/><ellipse cx="994.7" cy="442.8" rx="5" ry="42.2"/><ellipse cx="997.7" cy="442.8" rx="5" ry="42.2"/><ellipse cx="998.5" cy="442.8" rx="5" ry="42.2"/><ellipse cx="999.2" cy="442.8" rx="5" ry="42.2"/><ellipse cx="1000.1" cy="442.8" rx="5" ry="42.2"/><ellipse cx="1001.2" cy="442.8" rx="5" ry="42.2"/><ellipse cx="1002.5" cy="442.8" rx="5" ry="42.2"/><ellipse cx="1003.4" cy="442.8" rx="5" ry="42.2"/><ellipse cx="1004.2" cy="442.8" rx="5" ry="42.2"/><ellipse cx="1005.6" cy="442.8" rx="5" ry="42.2"/><ellipse cx="1006.8" cy="442.8" rx="5" ry="42.2"/><ellipse cx="1007.7" cy="442.8" rx="5" ry="42.2"/><ellipse cx="1008.9" cy="442.8" rx="5" ry="42.2"/><ellipse cx="1009.9" cy="442.8" rx="5" ry="42.2"/><ellipse cx="1012.9" cy="442.8" rx="5" ry="42.2"/><ellipse cx="1015.7" cy="442.8" rx="5" ry="42.2"/><ellipse cx="1019.1" cy="442.8" rx="5" ry="42.2"/><ellipse cx="1026.6" cy="442.8" rx="5" ry="42.2"/><ellipse cx="1030.3" cy="442.8" rx="5" ry="42.2"/><ellipse cx="1031.0" cy="442.8" rx="5" ry="42.2"/><ellipse cx="1031.9" cy="442.8" rx="5" ry="42.2"/><ellipse cx="1033.3" cy="442.8" rx="5" ry="42.2"/><ellipse cx="1033.9" cy="442.8" rx="5" ry="42.2"/><ellipse cx="1035.3" cy="442.8" rx="5" ry="42.2"/><ellipse cx="1036.6" cy="442.8" rx="5" ry="42.2"/><ellipse cx="1037.9" cy="442.8" rx="5" ry="42.2"/><ellipse cx="1038.7" cy="442.8" rx="5" ry="42.2"/><ellipse cx="1039.4" cy="442.8" rx="5" ry="42.2"/><ellipse cx="1042.5" cy="442.8" rx="5" ry="42.2"/><ellipse cx="1044.7" cy="442.8" rx="5" ry="42.2"/><ellipse cx="1046.7" cy="442.8" rx="5" ry="42.2"/><ellipse cx="1049.9" cy="442.8" rx="5" ry="42.2"/><ellipse cx="1054.5" cy="442.8" rx="5" ry="42.2"/><ellipse cx="1059.4" cy="442.8" rx="5" ry="42.2"/><ellipse cx="1066.3" cy="442.8" rx="5" ry="42.2"/><ellipse cx="1067.0" cy="442.8" rx="5" ry="42.2"/><ellipse cx="1068.3" cy="442.8" rx="5" ry="42.2"/><ellipse cx="1069.3" cy="442.8" rx="5" ry="42.2"/><ellipse cx="1070.4" cy="442.8" rx="5" ry="42.2"/><ellipse cx="1071.1" cy="442.8" rx="5" ry="42.2"/><ellipse cx="1072.5" cy="442.8" rx="5" ry="42.2"/><ellipse cx="1073.5" cy="442.8" rx="5" ry="42.2"/><ellipse cx="1074.9" cy="442.8" rx="5" ry="42.2"/><ellipse cx="1075.9" cy="442.8" rx="5" ry="42.2"/><ellipse cx="1076.7" cy="442.8" rx="5" ry="42.2"/><ellipse cx="1077.6" cy="442.8" rx="5" ry="42.2"/><ellipse cx="1078.5" cy="442.8" rx="5" ry="42.2"/><ellipse cx="1079.3" cy="442.8" rx="5" ry="42.2"/><ellipse cx="1080.5" cy="442.8" rx="5" ry="42.2"/><ellipse cx="1081.7" cy="442.8" rx="5" ry="42.2"/><ellipse cx="1085.4" cy="442.8" rx="5" ry="42.2"/><ellipse cx="1087.8" cy="442.8" rx="5" ry="42.2"/><ellipse cx="1089.8" cy="442.8" rx="5" ry="42.2"/><ellipse cx="1092.9" cy="442.8" rx="5" ry="42.2"/><ellipse cx="1095.0" cy="442.8" rx="5" ry="42.2"/><ellipse cx="1096.4" cy="442.8" rx="5" ry="42.2"/><ellipse cx="1097.4" cy="442.8" rx="5" ry="42.2"/><ellipse cx="1098.1" cy="442.8" rx="5" ry="42.2"/><ellipse cx="1098.9" cy="442.8" rx="5" ry="42.2"/><ellipse cx="1099.6" cy="442.8" rx="5" ry="42.2"/><ellipse cx="1100.4" cy="442.8" rx="5" ry="42.2"/><ellipse cx="1101.1" cy="442.8" rx="5" ry="42.2"/><ellipse cx="1101.9" cy="442.8" rx="5" ry="42.2"/><ellipse cx="1102.7" cy="442.8" rx="5" ry="42.2"/><ellipse cx="1104.6" cy="442.8" rx="5" ry="42.2"/><ellipse cx="1108.5" cy="442.8" rx="5" ry="42.2"/><ellipse cx="1112.0" cy="442.8" rx="5" ry="42.2"/><ellipse cx="1114.9" cy="442.8" rx="5" ry="42.2"/><ellipse cx="1117.5" cy="442.8" rx="5" ry="42.2"/><ellipse cx="1120.3" cy="442.8" rx="5" ry="42.2"/><ellipse cx="1121.4" cy="442.8" rx="5" ry="42.2"/><ellipse cx="1122.7" cy="442.8" rx="5" ry="42.2"/><ellipse cx="1123.5" cy="442.8" rx="5" ry="42.2"/><ellipse cx="1124.3" cy="442.8" rx="5" ry="42.2"/><ellipse cx="1125.2" cy="442.8" rx="5" ry="42.2"/><ellipse cx="1126.1" cy="442.8" rx="5" ry="42.2"/><ellipse cx="1127.1" cy="442.8" rx="5" ry="42.2"/><ellipse cx="1128.5" cy="442.8" rx="5" ry="42.2"/><ellipse cx="1129.8" cy="442.8" rx="5" ry="42.2"/><ellipse cx="1131.1" cy="442.8" rx="5" ry="42.2"/><ellipse cx="1131.8" cy="442.8" rx="5" ry="42.2"/><ellipse cx="1132.4" cy="442.8" rx="5" ry="42.2"/><ellipse cx="1137.0" cy="442.8" rx="5" ry="42.2"/><ellipse cx="1143.8" cy="442.8" rx="5" ry="42.2"/><ellipse cx="1146.9" cy="442.8" rx="5" ry="42.2"/><ellipse cx="1153.7" cy="442.8" rx="5" ry="42.2"/><ellipse cx="1156.1" cy="442.8" rx="5" ry="42.2"/><ellipse cx="1159.7" cy="442.8" rx="5" ry="42.2"/><ellipse cx="1162.9" cy="442.8" rx="5" ry="42.2"/><ellipse cx="1164.3" cy="442.8" rx="5" ry="42.2"/><ellipse cx="1165.5" cy="442.8" rx="5" ry="42.2"/><ellipse cx="1166.7" cy="442.8" rx="5" ry="42.2"/><ellipse cx="1167.9" cy="442.8" rx="5" ry="42.2"/><ellipse cx="1168.9" cy="442.8" rx="5" ry="42.2"/><ellipse cx="1172.1" cy="442.8" rx="5" ry="42.2"/><ellipse cx="1174.7" cy="442.8" rx="5" ry="42.2"/><ellipse cx="1177.5" cy="442.8" rx="5" ry="42.2"/><ellipse cx="1184.7" cy="442.8" rx="5" ry="42.2"/><ellipse cx="1187.1" cy="442.8" rx="5" ry="42.2"/><ellipse cx="1190.5" cy="442.8" rx="5" ry="42.2"/><ellipse cx="1191.5" cy="442.8" rx="5" ry="42.2"/><ellipse cx="1192.6" cy="442.8" rx="5" ry="42.2"/><ellipse cx="1193.6" cy="442.8" rx="5" ry="42.2"/><ellipse cx="1194.3" cy="442.8" rx="5" ry="42.2"/><ellipse cx="1195.5" cy="442.8" rx="5" ry="42.2"/><ellipse cx="1196.1" cy="442.8" rx="5" ry="42.2"/><ellipse cx="1196.9" cy="442.8" rx="5" ry="42.2"/><ellipse cx="1197.9" cy="442.8" rx="5" ry="42.2"/><ellipse cx="1202.7" cy="442.8" rx="5" ry="42.2"/><ellipse cx="1204.8" cy="442.8" rx="5" ry="42.2"/><ellipse cx="1208.0" cy="442.8" rx="5" ry="42.2"/><ellipse cx="1211.7" cy="442.8" rx="5" ry="42.2"/><ellipse cx="1212.5" cy="442.8" rx="5" ry="42.2"/><ellipse cx="1213.8" cy="442.8" rx="5" ry="42.2"/><ellipse cx="1215.0" cy="442.8" rx="5" ry="42.2"/><ellipse cx="1215.7" cy="442.8" rx="5" ry="42.2"/><ellipse cx="1220.5" cy="442.8" rx="5" ry="42.2"/><ellipse cx="1222.4" cy="442.8" rx="5" ry="42.2"/><ellipse cx="1224.8" cy="442.8" rx="5" ry="42.2"/><ellipse cx="1225.7" cy="442.8" rx="5" ry="42.2"/><ellipse cx="1226.3" cy="442.8" rx="5" ry="42.2"/><ellipse cx="1227.2" cy="442.8" rx="5" ry="42.2"/><ellipse cx="1228.5" cy="442.8" rx="5" ry="42.2"/><ellipse cx="1229.1" cy="442.8" rx="5" ry="42.2"/><ellipse cx="1230.2" cy="442.8" rx="5" ry="42.2"/><ellipse cx="1230.9" cy="442.8" rx="5" ry="42.2"/><ellipse cx="1232.2" cy="442.8" rx="5" ry="42.2"/><ellipse cx="1232.9" cy="442.8" rx="5" ry="42.2"/><ellipse cx="1233.9" cy="442.8" rx="5" ry="42.2"/><ellipse cx="1234.8" cy="442.8" rx="5" ry="42.2"/><ellipse cx="1236.1" cy="442.8" rx="5" ry="42.2"/><ellipse cx="1236.8" cy="442.8" rx="5" ry="42.2"/><ellipse cx="1237.9" cy="442.8" rx="5" ry="42.2"/><ellipse cx="1240.1" cy="442.8" rx="5" ry="42.2"/><ellipse cx="1242.8" cy="442.8" rx="5" ry="42.2"/><ellipse cx="1248.3" cy="442.8" rx="5" ry="42.2"/><ellipse cx="1250.4" cy="442.8" rx="5" ry="42.2"/><ellipse cx="1255.9" cy="442.8" rx="5" ry="42.2"/><ellipse cx="1257.8" cy="442.8" rx="5" ry="42.2"/><ellipse cx="1258.8" cy="442.8" rx="5" ry="42.2"/><ellipse cx="1260.0" cy="442.8" rx="5" ry="42.2"/><ellipse cx="1260.8" cy="442.8" rx="5" ry="42.2"/><ellipse cx="1261.5" cy="442.8" rx="5" ry="42.2"/><ellipse cx="1262.2" cy="442.8" rx="5" ry="42.2"/><ellipse cx="1262.9" cy="442.8" rx="5" ry="42.2"/><ellipse cx="1263.7" cy="442.8" rx="5" ry="42.2"/><ellipse cx="1264.9" cy="442.8" rx="5" ry="42.2"/><ellipse cx="1265.9" cy="442.8" rx="5" ry="42.2"/><ellipse cx="1266.9" cy="442.8" rx="5" ry="42.2"/><ellipse cx="1270.8" cy="442.8" rx="5" ry="42.2"/><ellipse cx="1273.0" cy="442.8" rx="5" ry="42.2"/><ellipse cx="1274.8" cy="442.8" rx="5" ry="42.2"/><ellipse cx="1277.1" cy="442.8" rx="5" ry="42.2"/><ellipse cx="1278.2" cy="442.8" rx="5" ry="42.2"/><ellipse cx="1279.5" cy="442.8" rx="5" ry="42.2"/><ellipse cx="1280.4" cy="442.8" rx="5" ry="42.2"/><ellipse cx="1281.6" cy="442.8" rx="5" ry="42.2"/><ellipse cx="1282.5" cy="442.8" rx="5" ry="42.2"/><ellipse cx="1285.3" cy="442.8" rx="5" ry="42.2"/><ellipse cx="1287.8" cy="442.8" rx="5" ry="42.2"/><ellipse cx="1290.1" cy="442.8" rx="5" ry="42.2"/><ellipse cx="1294.2" cy="442.8" rx="5" ry="42.2"/><ellipse cx="1297.8" cy="442.8" rx="5" ry="42.2"/><ellipse cx="1299.0" cy="442.8" rx="5" ry="42.2"/><ellipse cx="1299.7" cy="442.8" rx="5" ry="42.2"/><ellipse cx="1300.3" cy="442.8" rx="5" ry="42.2"/><ellipse cx="1301.0" cy="442.8" rx="5" ry="42.2"/><ellipse cx="1302.3" cy="442.8" rx="5" ry="42.2"/><ellipse cx="1303.2" cy="442.8" rx="5" ry="42.2"/><ellipse cx="1304.4" cy="442.8" rx="5" ry="42.2"/><ellipse cx="1305.8" cy="442.8" rx="5" ry="42.2"/><ellipse cx="1306.7" cy="442.8" rx="5" ry="42.2"/><ellipse cx="1307.5" cy="442.8" rx="5" ry="42.2"/><ellipse cx="1308.9" cy="442.8" rx="5" ry="42.2"/><ellipse cx="1310.0" cy="442.8" rx="5" ry="42.2"/><ellipse cx="1310.8" cy="442.8" rx="5" ry="42.2"/><ellipse cx="1312.1" cy="442.8" rx="5" ry="42.2"/><ellipse cx="1318.1" cy="442.8" rx="5" ry="42.2"/><ellipse cx="1322.4" cy="442.8" rx="5" ry="42.2"/><ellipse cx="1327.3" cy="442.8" rx="5" ry="42.2"/><ellipse cx="1330.2" cy="442.8" rx="5" ry="42.2"/><ellipse cx="1331.2" cy="442.8" rx="5" ry="42.2"/><ellipse cx="1332.6" cy="442.8" rx="5" ry="42.2"/><ellipse cx="1334.1" cy="442.8" rx="5" ry="42.2"/><ellipse cx="1335.0" cy="442.8" rx="5" ry="42.2"/><ellipse cx="1335.8" cy="442.8" rx="5" ry="42.2"/><ellipse cx="1339.2" cy="442.8" rx="5" ry="42.2"/><ellipse cx="1341.0" cy="442.8" rx="5" ry="42.2"/><ellipse cx="1347.1" cy="442.8" rx="5" ry="42.2"/><ellipse cx="1350.6" cy="442.8" rx="5" ry="42.2"/><ellipse cx="1353.6" cy="442.8" rx="5" ry="42.2"/><ellipse cx="1354.5" cy="442.8" rx="5" ry="42.2"/><ellipse cx="1355.8" cy="442.8" rx="5" ry="42.2"/><ellipse cx="1356.4" cy="442.8" rx="5" ry="42.2"/><ellipse cx="1357.2" cy="442.8" rx="5" ry="42.2"/><ellipse cx="1358.4" cy="442.8" rx="5" ry="42.2"/><ellipse cx="1359.2" cy="442.8" rx="5" ry="42.2"/><ellipse cx="1359.9" cy="442.8" rx="5" ry="42.2"/><ellipse cx="1360.5" cy="442.8" rx="5" ry="42.2"/><ellipse cx="1361.6" cy="442.8" rx="5" ry="42.2"/><ellipse cx="1362.5" cy="442.8" rx="5" ry="42.2"/><ellipse cx="1363.9" cy="442.8" rx="5" ry="42.2"/><ellipse cx="1369.8" cy="442.8" rx="5" ry="42.2"/><ellipse cx="1371.8" cy="442.8" rx="5" ry="42.2"/><ellipse cx="1373.2" cy="442.8" rx="5" ry="42.2"/><ellipse cx="1374.6" cy="442.8" rx="5" ry="42.2"/><ellipse cx="1375.4" cy="442.8" rx="5" ry="42.2"/><ellipse cx="1376.1" cy="442.8" rx="5" ry="42.2"/><ellipse cx="1377.1" cy="442.8" rx="5" ry="42.2"/><ellipse cx="1378.4" cy="442.8" rx="5" ry="42.2"/><ellipse cx="1379.2" cy="442.8" rx="5" ry="42.2"/><ellipse cx="1380.3" cy="442.8" rx="5" ry="42.2"/><ellipse cx="1381.6" cy="442.8" rx="5" ry="42.2"/><ellipse cx="1382.8" cy="442.8" rx="5" ry="42.2"/><ellipse cx="1384.1" cy="442.8" rx="5" ry="42.2"/><ellipse cx="1386.7" cy="442.8" rx="5" ry="42.2"/><ellipse cx="1389.5" cy="442.8" rx="5" ry="42.2"/><ellipse cx="1391.6" cy="442.8" rx="5" ry="42.2"/><ellipse cx="1393.7" cy="442.8" rx="5" ry="42.2"/><ellipse cx="1394.4" cy="442.8" rx="5" ry="42.2"/><ellipse cx="1395.1" cy="442.8" rx="5" ry="42.2"/><ellipse cx="1395.9" cy="442.8" rx="5" ry="42.2"/><ellipse cx="1396.7" cy="442.8" rx="5" ry="42.2"/><ellipse cx="1397.7" cy="442.8" rx="5" ry="42.2"/><ellipse cx="1398.9" cy="442.8" rx="5" ry="42.2"/><ellipse cx="1399.6" cy="442.8" rx="5" ry="42.2"/><ellipse cx="1400.6" cy="442.8" rx="5" ry="42.2"/><ellipse cx="1401.2" cy="442.8" rx="5" ry="42.2"/><ellipse cx="1401.8" cy="442.8" rx="5" ry="42.2"/><ellipse cx="1403.2" cy="442.8" rx="5" ry="42.2"/><ellipse cx="1404.0" cy="442.8" rx="5" ry="42.2"/><ellipse cx="1404.9" cy="442.8" rx="5" ry="42.2"/><ellipse cx="1407.2" cy="442.8" rx="5" ry="42.2"/><ellipse cx="1409.2" cy="442.8" rx="5" ry="42.2"/><ellipse cx="1412.5" cy="442.8" rx="5" ry="42.2"/><ellipse cx="1425.0" cy="442.8" rx="5" ry="42.2"/><ellipse cx="1431.3" cy="442.8" rx="5" ry="42.2"/><ellipse cx="1432.3" cy="442.8" rx="5" ry="42.2"/><ellipse cx="1433.1" cy="442.8" rx="5" ry="42.2"/><ellipse cx="1434.4" cy="442.8" rx="5" ry="42.2"/><ellipse cx="1435.8" cy="442.8" rx="5" ry="42.2"/><ellipse cx="1436.5" cy="442.8" rx="5" ry="42.2"/><ellipse cx="1437.6" cy="442.8" rx="5" ry="42.2"/><ellipse cx="1439.4" cy="442.8" rx="5" ry="42.2"/><ellipse cx="1441.3" cy="442.8" rx="5" ry="42.2"/><ellipse cx="1446.4" cy="442.8" rx="5" ry="42.2"/><ellipse cx="1451.3" cy="442.8" rx="5" ry="42.2"/><ellipse cx="1455.9" cy="442.8" rx="5" ry="42.2"/><ellipse cx="1458.3" cy="442.8" rx="5" ry="42.2"/><ellipse cx="1459.1" cy="442.8" rx="5" ry="42.2"/><ellipse cx="1459.9" cy="442.8" rx="5" ry="42.2"/><ellipse cx="1461.2" cy="442.8" rx="5" ry="42.2"/><ellipse cx="1462.2" cy="442.8" rx="5" ry="42.2"/><ellipse cx="1462.9" cy="442.8" rx="5" ry="42.2"/><ellipse cx="1463.6" cy="442.8" rx="5" ry="42.2"/><ellipse cx="1464.5" cy="442.8" rx="5" ry="42.2"/><ellipse cx="1465.6" cy="442.8" rx="5" ry="42.2"/><ellipse cx="1466.7" cy="442.8" rx="5" ry="42.2"/><ellipse cx="1467.4" cy="442.8" rx="5" ry="42.2"/><ellipse cx="1468.1" cy="442.8" rx="5" ry="42.2"/><ellipse cx="1469.3" cy="442.8" rx="5" ry="42.2"/><ellipse cx="1470.3" cy="442.8" rx="5" ry="42.2"/><ellipse cx="1474.2" cy="442.8" rx="5" ry="42.2"/><ellipse cx="1477.1" cy="442.8" rx="5" ry="42.2"/><ellipse cx="1481.0" cy="442.8" rx="5" ry="42.2"/><ellipse cx="1483.9" cy="442.8" rx="5" ry="42.2"/><ellipse cx="1485.0" cy="442.8" rx="5" ry="42.2"/><ellipse cx="1486.0" cy="442.8" rx="5" ry="42.2"/><ellipse cx="1486.9" cy="442.8" rx="5" ry="42.2"/><ellipse cx="1488.3" cy="442.8" rx="5" ry="42.2"/><ellipse cx="1489.3" cy="442.8" rx="5" ry="42.2"/><ellipse cx="1490.0" cy="442.8" rx="5" ry="42.2"/><ellipse cx="1490.7" cy="442.8" rx="5" ry="42.2"/><ellipse cx="1491.4" cy="442.8" rx="5" ry="42.2"/><ellipse cx="1492.5" cy="442.8" rx="5" ry="42.2"/><ellipse cx="1494.5" cy="442.8" rx="5" ry="42.2"/><ellipse cx="1497.1" cy="442.8" rx="5" ry="42.2"/><ellipse cx="1501.9" cy="442.8" rx="5" ry="42.2"/><ellipse cx="1504.6" cy="442.8" rx="5" ry="42.2"/><ellipse cx="1505.8" cy="442.8" rx="5" ry="42.2"/><ellipse cx="1506.6" cy="442.8" rx="5" ry="42.2"/><ellipse cx="1507.5" cy="442.8" rx="5" ry="42.2"/><ellipse cx="1508.2" cy="442.8" rx="5" ry="42.2"/><ellipse cx="1508.9" cy="442.8" rx="5" ry="42.2"/><ellipse cx="1509.6" cy="442.8" rx="5" ry="42.2"/><ellipse cx="1510.5" cy="442.8" rx="5" ry="42.2"/><ellipse cx="1511.8" cy="442.8" rx="5" ry="42.2"/><ellipse cx="1513.0" cy="442.8" rx="5" ry="42.2"/><ellipse cx="1516.0" cy="442.8" rx="5" ry="42.2"/><ellipse cx="1519.1" cy="442.8" rx="5" ry="42.2"/><ellipse cx="1521.7" cy="442.8" rx="5" ry="42.2"/><ellipse cx="1522.7" cy="442.8" rx="5" ry="42.2"/><ellipse cx="1524.0" cy="442.8" rx="5" ry="42.2"/><ellipse cx="1525.2" cy="442.8" rx="5" ry="42.2"/><ellipse cx="1526.5" cy="442.8" rx="5" ry="42.2"/><ellipse cx="1527.2" cy="442.8" rx="5" ry="42.2"/><ellipse cx="1528.5" cy="442.8" rx="5" ry="42.2"/><ellipse cx="1529.3" cy="442.8" rx="5" ry="42.2"/><ellipse cx="1530.2" cy="442.8" rx="5" ry="42.2"/><ellipse cx="1531.5" cy="442.8" rx="5" ry="42.2"/><ellipse cx="1532.8" cy="442.8" rx="5" ry="42.2"/><ellipse cx="1533.6" cy="442.8" rx="5" ry="42.2"/><ellipse cx="1534.4" cy="442.8" rx="5" ry="42.2"/><ellipse cx="1535.3" cy="442.8" rx="5" ry="42.2"/><ellipse cx="1536.4" cy="442.8" rx="5" ry="42.2"/><ellipse cx="1538.4" cy="442.8" rx="5" ry="42.2"/><ellipse cx="1546.2" cy="442.8" rx="5" ry="42.2"/><ellipse cx="1549.3" cy="442.8" rx="5" ry="42.2"/><ellipse cx="1553.7" cy="442.8" rx="5" ry="42.2"/><ellipse cx="1557.4" cy="442.8" rx="5" ry="42.2"/><ellipse cx="1558.6" cy="442.8" rx="5" ry="42.2"/><ellipse cx="1559.6" cy="442.8" rx="5" ry="42.2"/><ellipse cx="1560.8" cy="442.8" rx="5" ry="42.2"/><ellipse cx="1561.6" cy="442.8" rx="5" ry="42.2"/><ellipse cx="1562.6" cy="442.8" rx="5" ry="42.2"/><ellipse cx="1563.7" cy="442.8" rx="5" ry="42.2"/><ellipse cx="1564.6" cy="442.8" rx="5" ry="42.2"/><ellipse cx="1565.8" cy="442.8" rx="5" ry="42.2"/><ellipse cx="1566.8" cy="442.8" rx="5" ry="42.2"/><ellipse cx="1567.7" cy="442.8" rx="5" ry="42.2"/><ellipse cx="1570.9" cy="442.8" rx="5" ry="42.2"/><ellipse cx="1573.3" cy="442.8" rx="5" ry="42.2"/><ellipse cx="1574.6" cy="442.8" rx="5" ry="42.2"/><ellipse cx="1575.6" cy="442.8" rx="5" ry="42.2"/><ellipse cx="1576.4" cy="442.8" rx="5" ry="42.2"/><ellipse cx="1577.4" cy="442.8" rx="5" ry="42.2"/><ellipse cx="1578.0" cy="442.8" rx="5" ry="42.2"/><ellipse cx="1578.8" cy="442.8" rx="5" ry="42.2"/><ellipse cx="1579.7" cy="442.8" rx="5" ry="42.2"/><ellipse cx="1580.4" cy="442.8" rx="5" ry="42.2"/><ellipse cx="1581.4" cy="442.8" rx="5" ry="42.2"/><ellipse cx="1582.4" cy="442.8" rx="5" ry="42.2"/><ellipse cx="1583.0" cy="442.8" rx="5" ry="42.2"/><ellipse cx="1584.2" cy="442.8" rx="5" ry="42.2"/><ellipse cx="1584.9" cy="442.8" rx="5" ry="42.2"/><ellipse cx="1587.7" cy="442.8" rx="5" ry="42.2"/><ellipse cx="1590.5" cy="442.8" rx="5" ry="42.2"/><ellipse cx="1592.5" cy="442.8" rx="5" ry="42.2"/><ellipse cx="1605.6" cy="442.8" rx="5" ry="42.2"/><ellipse cx="1608.8" cy="442.8" rx="5" ry="42.2"/><ellipse cx="1611.5" cy="442.8" rx="5" ry="42.2"/><ellipse cx="1614.9" cy="442.8" rx="5" ry="42.2"/><ellipse cx="1617.9" cy="442.8" rx="5" ry="42.2"/><ellipse cx="1619.4" cy="442.8" rx="5" ry="42.2"/><ellipse cx="1620.7" cy="442.8" rx="5" ry="42.2"/><ellipse cx="1621.5" cy="442.8" rx="5" ry="42.2"/><ellipse cx="1622.7" cy="442.8" rx="5" ry="42.2"/><ellipse cx="1624.1" cy="442.8" rx="5" ry="42.2"/><ellipse cx="1624.8" cy="442.8" rx="5" ry="42.2"/><ellipse cx="1625.7" cy="442.8" rx="5" ry="42.2"/><ellipse cx="1626.9" cy="442.8" rx="5" ry="42.2"/><ellipse cx="1629.6" cy="442.8" rx="5" ry="42.2"/><ellipse cx="1633.6" cy="442.8" rx="5" ry="42.2"/><ellipse cx="1636.8" cy="442.8" rx="5" ry="42.2"/><ellipse cx="1637.5" cy="442.8" rx="5" ry="42.2"/><ellipse cx="1638.4" cy="442.8" rx="5" ry="42.2"/><ellipse cx="1639.4" cy="442.8" rx="5" ry="42.2"/><ellipse cx="1640.3" cy="442.8" rx="5" ry="42.2"/><ellipse cx="1640.9" cy="442.8" rx="5" ry="42.2"/><ellipse cx="1641.7" cy="442.8" rx="5" ry="42.2"/><ellipse cx="1642.4" cy="442.8" rx="5" ry="42.2"/><ellipse cx="1643.8" cy="442.8" rx="5" ry="42.2"/><ellipse cx="1645.0" cy="442.8" rx="5" ry="42.2"/><ellipse cx="1646.3" cy="442.8" rx="5" ry="42.2"/><ellipse cx="1647.1" cy="442.8" rx="5" ry="42.2"/><ellipse cx="1649.6" cy="442.8" rx="5" ry="42.2"/><ellipse cx="1653.5" cy="442.8" rx="5" ry="42.2"/><ellipse cx="1657.7" cy="442.8" rx="5" ry="42.2"/><ellipse cx="1660.7" cy="442.8" rx="5" ry="42.2"/><ellipse cx="1661.5" cy="442.8" rx="5" ry="42.2"/><ellipse cx="1662.6" cy="442.8" rx="5" ry="42.2"/><ellipse cx="1663.9" cy="442.8" rx="5" ry="42.2"/><ellipse cx="1665.1" cy="442.8" rx="5" ry="42.2"/><ellipse cx="1666.0" cy="442.8" rx="5" ry="42.2"/><ellipse cx="1673.1" cy="442.8" rx="5" ry="42.2"/><ellipse cx="1675.9" cy="442.8" rx="5" ry="42.2"/><ellipse cx="1678.0" cy="442.8" rx="5" ry="42.2"/><ellipse cx="1681.3" cy="442.8" rx="5" ry="42.2"/><ellipse cx="1684.9" cy="442.8" rx="5" ry="42.2"/><ellipse cx="1686.3" cy="442.8" rx="5" ry="42.2"/><ellipse cx="1687.7" cy="442.8" rx="5" ry="42.2"/><ellipse cx="1689.1" cy="442.8" rx="5" ry="42.2"/><ellipse cx="1690.4" cy="442.8" rx="5" ry="42.2"/><ellipse cx="1691.7" cy="442.8" rx="5" ry="42.2"/><ellipse cx="1692.9" cy="442.8" rx="5" ry="42.2"/><ellipse cx="1693.7" cy="442.8" rx="5" ry="42.2"/><ellipse cx="1694.5" cy="442.8" rx="5" ry="42.2"/><ellipse cx="1695.7" cy="442.8" rx="5" ry="42.2"/><ellipse cx="1696.6" cy="442.8" rx="5" ry="42.2"/><ellipse cx="1697.5" cy="442.8" rx="5" ry="42.2"/><ellipse cx="1698.2" cy="442.8" rx="5" ry="42.2"/><ellipse cx="1699.2" cy="442.8" rx="5" ry="42.2"/><ellipse cx="1700.3" cy="442.8" rx="5" ry="42.2"/><ellipse cx="1702.1" cy="442.8" rx="5" ry="42.2"/><ellipse cx="1704.0" cy="442.8" rx="5" ry="42.2"/><ellipse cx="1705.1" cy="442.8" rx="5" ry="42.2"/><ellipse cx="1706.1" cy="442.8" rx="5" ry="42.2"/><ellipse cx="1706.9" cy="442.8" rx="5" ry="42.2"/><ellipse cx="1707.6" cy="442.8" rx="5" ry="42.2"/><ellipse cx="1708.5" cy="442.8" rx="5" ry="42.2"/><ellipse cx="1709.8" cy="442.8" rx="5" ry="42.2"/><ellipse cx="1710.6" cy="442.8" rx="5" ry="42.2"/><ellipse cx="1711.2" cy="442.8" rx="5" ry="42.2"/><ellipse cx="1712.5" cy="442.8" rx="5" ry="42.2"/><ellipse cx="1714.4" cy="442.8" rx="5" ry="42.2"/><ellipse cx="1719.2" cy="442.8" rx="5" ry="42.2"/><ellipse cx="1723.1" cy="442.8" rx="5" ry="42.2"/><ellipse cx="1724.9" cy="442.8" rx="5" ry="42.2"/><ellipse cx="1729.1" cy="442.8" rx="5" ry="42.2"/><ellipse cx="1731.8" cy="442.8" rx="5" ry="42.2"/><ellipse cx="1734.9" cy="442.8" rx="5" ry="42.2"/><ellipse cx="1736.0" cy="442.8" rx="5" ry="42.2"/><ellipse cx="1736.7" cy="442.8" rx="5" ry="42.2"/><ellipse cx="1737.3" cy="442.8" rx="5" ry="42.2"/><ellipse cx="1737.9" cy="442.8" rx="5" ry="42.2"/><ellipse cx="1738.6" cy="442.8" rx="5" ry="42.2"/><ellipse cx="1739.3" cy="442.8" rx="5" ry="42.2"/><ellipse cx="1740.1" cy="442.8" rx="5" ry="42.2"/><ellipse cx="1741.4" cy="442.8" rx="5" ry="42.2"/><ellipse cx="1742.1" cy="442.8" rx="5" ry="42.2"/><ellipse cx="1743.2" cy="442.8" rx="5" ry="42.2"/><ellipse cx="1744.4" cy="442.8" rx="5" ry="42.2"/><ellipse cx="1745.2" cy="442.8" rx="5" ry="42.2"/><ellipse cx="1746.1" cy="442.8" rx="5" ry="42.2"/><ellipse cx="1747.2" cy="442.8" rx="5" ry="42.2"/><ellipse cx="1748.3" cy="442.8" rx="5" ry="42.2"/><ellipse cx="1753.0" cy="442.8" rx="5" ry="42.2"/><ellipse cx="1755.2" cy="442.8" rx="5" ry="42.2"/><ellipse cx="1757.1" cy="442.8" rx="5" ry="42.2"/><ellipse cx="1761.7" cy="442.8" rx="5" ry="42.2"/><ellipse cx="1764.9" cy="442.8" rx="5" ry="42.2"/><ellipse cx="1769.4" cy="442.8" rx="5" ry="42.2"/><ellipse cx="1772.3" cy="442.8" rx="5" ry="42.2"/><ellipse cx="1773.0" cy="442.8" rx="5" ry="42.2"/><ellipse cx="1774.5" cy="442.8" rx="5" ry="42.2"/><ellipse cx="1775.3" cy="442.8" rx="5" ry="42.2"/><ellipse cx="1776.4" cy="442.8" rx="5" ry="42.2"/><ellipse cx="1777.1" cy="442.8" rx="5" ry="42.2"/><ellipse cx="1778.5" cy="442.8" rx="5" ry="42.2"/><ellipse cx="1779.9" cy="442.8" rx="5" ry="42.2"/><ellipse cx="1781.3" cy="442.8" rx="5" ry="42.2"/><ellipse cx="1782.1" cy="442.8" rx="5" ry="42.2"/><ellipse cx="1782.8" cy="442.8" rx="5" ry="42.2"/><ellipse cx="1783.9" cy="442.8" rx="5" ry="42.2"/><ellipse cx="1786.8" cy="442.8" rx="5" ry="42.2"/><ellipse cx="1789.0" cy="442.8" rx="5" ry="42.2"/><ellipse cx="1793.9" cy="442.8" rx="5" ry="42.2"/><ellipse cx="1796.9" cy="442.8" rx="5" ry="42.2"/><ellipse cx="1799.1" cy="442.8" rx="5" ry="42.2"/><ellipse cx="1802.0" cy="442.8" rx="5" ry="42.2"/><ellipse cx="1809.6" cy="442.8" rx="5" ry="42.2"/><ellipse cx="1810.3" cy="442.8" rx="5" ry="42.2"/><ellipse cx="1811.3" cy="442.8" rx="5" ry="42.2"/><ellipse cx="1812.4" cy="442.8" rx="5" ry="42.2"/><ellipse cx="1813.3" cy="442.8" rx="5" ry="42.2"/><ellipse cx="1814.6" cy="442.8" rx="5" ry="42.2"/><ellipse cx="1816.0" cy="442.8" rx="5" ry="42.2"/><ellipse cx="1817.4" cy="442.8" rx="5" ry="42.2"/><ellipse cx="1818.7" cy="442.8" rx="5" ry="42.2"/><ellipse cx="1819.8" cy="442.8" rx="5" ry="42.2"/><ellipse cx="1824.3" cy="442.8" rx="5" ry="42.2"/><ellipse cx="1828.2" cy="442.8" rx="5" ry="42.2"/><ellipse cx="1832.5" cy="442.8" rx="5" ry="42.2"/><ellipse cx="1834.6" cy="442.8" rx="5" ry="42.2"/><ellipse cx="1837.9" cy="442.8" rx="5" ry="42.2"/><ellipse cx="1838.6" cy="442.8" rx="5" ry="42.2"/><ellipse cx="1839.3" cy="442.8" rx="5" ry="42.2"/><ellipse cx="1839.9" cy="442.8" rx="5" ry="42.2"/><ellipse cx="1841.3" cy="442.8" rx="5" ry="42.2"/><ellipse cx="1842.2" cy="442.8" rx="5" ry="42.2"/><ellipse cx="1842.9" cy="442.8" rx="5" ry="42.2"/><ellipse cx="1844.9" cy="442.8" rx="5" ry="42.2"/><ellipse cx="1848.2" cy="442.8" rx="5" ry="42.2"/><ellipse cx="1849.4" cy="442.8" rx="5" ry="42.2"/><ellipse cx="1850.1" cy="442.8" rx="5" ry="42.2"/><ellipse cx="1851.2" cy="442.8" rx="5" ry="42.2"/><ellipse cx="1852.1" cy="442.8" rx="5" ry="42.2"/><ellipse cx="1853.4" cy="442.8" rx="5" ry="42.2"/><ellipse cx="1856.7" cy="442.8" rx="5" ry="42.2"/><ellipse cx="1861.6" cy="442.8" rx="5" ry="42.2"/><ellipse cx="1866.9" cy="442.8" rx="5" ry="42.2"/><ellipse cx="1868.9" cy="442.8" rx="5" ry="42.2"/><ellipse cx="1871.9" cy="442.8" rx="5" ry="42.2"/><ellipse cx="1876.2" cy="442.8" rx="5" ry="42.2"/><ellipse cx="1877.4" cy="442.8" rx="5" ry="42.2"/><ellipse cx="1878.4" cy="442.8" rx="5" ry="42.2"/><ellipse cx="1879.1" cy="442.8" rx="5" ry="42.2"/><ellipse cx="1880.4" cy="442.8" rx="5" ry="42.2"/><ellipse cx="1881.5" cy="442.8" rx="5" ry="42.2"/><ellipse cx="1882.4" cy="442.8" rx="5" ry="42.2"/><ellipse cx="1883.2" cy="442.8" rx="5" ry="42.2"/><ellipse cx="1884.1" cy="442.8" rx="5" ry="42.2"/><ellipse cx="1885.0" cy="442.8" rx="5" ry="42.2"/><ellipse cx="1886.4" cy="442.8" rx="5" ry="42.2"/><ellipse cx="1887.0" cy="442.8" rx="5" ry="42.2"/><ellipse cx="1888.2" cy="442.8" rx="5" ry="42.2"/><ellipse cx="1889.6" cy="442.8" rx="5" ry="42.2"/><ellipse cx="1890.9" cy="442.8" rx="5" ry="42.2"/><ellipse cx="1893.9" cy="442.8" rx="5" ry="42.2"/><ellipse cx="1897.1" cy="442.8" rx="5" ry="42.2"/><ellipse cx="1899.5" cy="442.8" rx="5" ry="42.2"/><ellipse cx="1903.4" cy="442.8" rx="5" ry="42.2"/><ellipse cx="1907.5" cy="442.8" rx="5" ry="42.2"/><ellipse cx="1910.5" cy="442.8" rx="5" ry="42.2"/><ellipse cx="1911.6" cy="442.8" rx="5" ry="42.2"/><ellipse cx="1912.5" cy="442.8" rx="5" ry="42.2"/><ellipse cx="1913.4" cy="442.8" rx="5" ry="42.2"/><ellipse cx="1914.5" cy="442.8" rx="5" ry="42.2"/><ellipse cx="1915.3" cy="442.8" rx="5" ry="42.2"/><ellipse cx="1917.8" cy="442.8" rx="5" ry="42.2"/><ellipse cx="1920.7" cy="442.8" rx="5" ry="42.2"/><ellipse cx="1922.1" cy="442.8" rx="5" ry="42.2"/><ellipse cx="1923.3" cy="442.8" rx="5" ry="42.2"/><ellipse cx="1924.7" cy="442.8" rx="5" ry="42.2"/><ellipse cx="1925.7" cy="442.8" rx="5" ry="42.2"/><ellipse cx="1926.8" cy="442.8" rx="5" ry="42.2"/><ellipse cx="1927.5" cy="442.8" rx="5" ry="42.2"/><ellipse cx="1933.3" cy="442.8" rx="5" ry="42.2"/><ellipse cx="1936.5" cy="442.8" rx="5" ry="42.2"/><ellipse cx="1940.5" cy="442.8" rx="5" ry="42.2"/><ellipse cx="1941.6" cy="442.8" rx="5" ry="42.2"/><ellipse cx="1942.3" cy="442.8" rx="5" ry="42.2"/><ellipse cx="1943.2" cy="442.8" rx="5" ry="42.2"/><ellipse cx="1943.9" cy="442.8" rx="5" ry="42.2"/><ellipse cx="1945.3" cy="442.8" rx="5" ry="42.2"/><ellipse cx="1946.6" cy="442.8" rx="5" ry="42.2"/><ellipse cx="1947.8" cy="442.8" rx="5" ry="42.2"/><ellipse cx="1948.8" cy="442.8" rx="5" ry="42.2"/><ellipse cx="1949.9" cy="442.8" rx="5" ry="42.2"/><ellipse cx="1950.9" cy="442.8" rx="5" ry="42.2"/><ellipse cx="1951.7" cy="442.8" rx="5" ry="42.2"/><ellipse cx="1952.7" cy="442.8" rx="5" ry="42.2"/><ellipse cx="1953.8" cy="442.8" rx="5" ry="42.2"/><ellipse cx="1954.5" cy="442.8" rx="5" ry="42.2"/><ellipse cx="1955.9" cy="442.8" rx="5" ry="42.2"/><ellipse cx="1958.4" cy="442.8" rx="5" ry="42.2"/><ellipse cx="1961.2" cy="442.8" rx="5" ry="42.2"/><ellipse cx="1965.6" cy="442.8" rx="5" ry="42.2"/><ellipse cx="1967.9" cy="442.8" rx="5" ry="42.2"/><ellipse cx="1970.8" cy="442.8" rx="5" ry="42.2"/><ellipse cx="1975.4" cy="442.8" rx="5" ry="42.2"/><ellipse cx="1977.8" cy="442.8" rx="5" ry="42.2"/><ellipse cx="1978.9" cy="442.8" rx="5" ry="42.2"/><ellipse cx="1979.6" cy="442.8" rx="5" ry="42.2"/><ellipse cx="1980.6" cy="442.8" rx="5" ry="42.2"/><ellipse cx="1981.9" cy="442.8" rx="5" ry="42.2"/><ellipse cx="1982.7" cy="442.8" rx="5" ry="42.2"/><ellipse cx="1983.5" cy="442.8" rx="5" ry="42.2"/><ellipse cx="1984.3" cy="442.8" rx="5" ry="42.2"/><ellipse cx="1985.5" cy="442.8" rx="5" ry="42.2"/><ellipse cx="1987.6" cy="442.8" rx="5" ry="42.2"/><ellipse cx="1989.8" cy="442.8" rx="5" ry="42.2"/><ellipse cx="1991.8" cy="442.8" rx="5" ry="42.2"/><ellipse cx="1993.9" cy="442.8" rx="5" ry="42.2"/><ellipse cx="2001.5" cy="442.8" rx="5" ry="42.2"/><ellipse cx="2004.6" cy="442.8" rx="5" ry="42.2"/><ellipse cx="2005.4" cy="442.8" rx="5" ry="42.2"/><ellipse cx="2006.1" cy="442.8" rx="5" ry="42.2"/><ellipse cx="2006.8" cy="442.8" rx="5" ry="42.2"/><ellipse cx="2007.7" cy="442.8" rx="5" ry="42.2"/><ellipse cx="2008.5" cy="442.8" rx="5" ry="42.2"/><ellipse cx="2011.2" cy="442.8" rx="5" ry="42.2"/><ellipse cx="2013.3" cy="442.8" rx="5" ry="42.2"/><ellipse cx="2015.2" cy="442.8" rx="5" ry="42.2"/><ellipse cx="2018.1" cy="442.8" rx="5" ry="42.2"/><ellipse cx="2018.9" cy="442.8" rx="5" ry="42.2"/><ellipse cx="2020.3" cy="442.8" rx="5" ry="42.2"/><ellipse cx="2021.2" cy="442.8" rx="5" ry="42.2"/><ellipse cx="2021.8" cy="442.8" rx="5" ry="42.2"/><ellipse cx="2022.3" cy="442.8" rx="5" ry="42.2"/><ellipse cx="262.3" cy="573.4" rx="5.05" ry="42.4"/><ellipse cx="263.2" cy="573.4" rx="5.05" ry="42.4"/><ellipse cx="264.1" cy="573.4" rx="5.05" ry="42.4"/><ellipse cx="265.0" cy="573.4" rx="5.05" ry="42.4"/><ellipse cx="267.0" cy="573.4" rx="5.05" ry="42.4"/><ellipse cx="267.9" cy="573.4" rx="5.05" ry="42.4"/><ellipse cx="268.8" cy="573.4" rx="5.05" ry="42.4"/><ellipse cx="270.4" cy="573.4" rx="5.05" ry="42.4"/><ellipse cx="271.3" cy="573.4" rx="5.05" ry="42.4"/><ellipse cx="272.2" cy="573.4" rx="5.05" ry="42.4"/><ellipse cx="273.1" cy="573.4" rx="5.05" ry="42.4"/><ellipse cx="275.7" cy="573.4" rx="5.05" ry="42.4"/><ellipse cx="276.6" cy="573.4" rx="5.05" ry="42.4"/><ellipse cx="277.5" cy="573.4" rx="5.05" ry="42.4"/><ellipse cx="278.4" cy="573.4" rx="5.05" ry="42.4"/><ellipse cx="280.2" cy="573.4" rx="5.05" ry="42.4"/><ellipse cx="281.1" cy="573.4" rx="5.05" ry="42.4"/><ellipse cx="283.6" cy="573.4" rx="5.05" ry="42.4"/><ellipse cx="284.5" cy="573.4" rx="5.05" ry="42.4"/><ellipse cx="289.8" cy="573.4" rx="5.05" ry="42.4"/></g><path d="M173 634.5V626.7H2474V634.5M402 626.7V634.5M632.5 626.7V634.5M863 626.7V634.5M1093 626.7V634.5M1323.2 626.7V634.5M1553.3 626.7V634.5M1783.5 626.7V634.5M2013.8 626.7V634.5M2244.2 626.7V634.5" fill="none" stroke="#6e6e6e" stroke-width="1.6"/></svg>
<span class="t" style="left:172.35px;top:638.00px;font-size:16.3px;color:#1e1e1e;transform:scaleX(1.1475);">117 460 864</span>
<span class="t" style="left:351.80px;top:638.00px;font-size:16.3px;color:#1e1e1e;transform:scaleX(1.1475);">117 486 856</span>
<span class="t" style="left:582.30px;top:638.00px;font-size:16.3px;color:#1e1e1e;transform:scaleX(1.1475);">117 512 849</span>
<span class="t" style="left:812.80px;top:638.00px;font-size:16.3px;color:#1e1e1e;transform:scaleX(1.1475);">117 538 842</span>
<span class="t" style="left:1042.80px;top:638.00px;font-size:16.3px;color:#1e1e1e;transform:scaleX(1.1475);">117 564 835</span>
<span class="t" style="left:1273.00px;top:638.00px;font-size:16.3px;color:#1e1e1e;transform:scaleX(1.1475);">117 590 828</span>
<span class="t" style="left:1503.10px;top:638.00px;font-size:16.3px;color:#1e1e1e;transform:scaleX(1.1475);">117 616 821</span>
<span class="t" style="left:1733.30px;top:638.00px;font-size:16.3px;color:#1e1e1e;transform:scaleX(1.1475);">117 642 814</span>
<span class="t" style="left:1963.60px;top:638.00px;font-size:16.3px;color:#1e1e1e;transform:scaleX(1.1475);">117 668 807</span>
<span class="t" style="left:2194.00px;top:638.00px;font-size:16.3px;color:#1e1e1e;transform:scaleX(1.1475);">117 694 800</span>
<span class="t" style="left:2371.85px;top:638.00px;font-size:16.3px;color:#1e1e1e;transform:scaleX(1.1475);">117 720 792</span>
</div>
<div class="fbar"></div>
<div id="filters" style="position:absolute;left:0;top:0;z-index:3">
<svg class="abs" style="left:122px;top:733px" width="16" height="12" viewBox="0 0 16 12"><path d="M0.5 1h14.5v2h-14.5zM2.75 5.1h10v2h-10zM5.75 9.2h3.8v1.9h-3.8z" fill="#757575"/></svg>
<div class="cb" style="left:158.7px"></div>
<div class="cb" style="left:287.8px"></div>
<span class="t" style="left:184.56px;top:732.00px;font-size:16.7px;color:#757575;transform:scaleX(0.9427);">EXOME</span>
<span class="t" style="left:313.75px;top:732.00px;font-size:16.7px;color:#757575;transform:scaleX(0.9454);">GENOME</span>
<span class="t" style="left:430.50px;top:732.00px;font-size:16.7px;color:#757575;transform:scaleX(1.0277);">TRANSCRIPT CONSEQUENCES</span>
<span class="t" style="left:758.25px;top:732.00px;font-size:16.7px;color:#757575;transform:scaleX(1.0146);">ALLELE FREQUENCY</span>
<span class="t" style="left:998.23px;top:732.00px;font-size:16.7px;color:#757575;transform:scaleX(1.0231);">REGION</span>
<svg class="abs" style="left:697.5px;top:737.3px" width="9" height="5" viewBox="0 0 9 5"><path d="M0 0h8.6L4.3 4.4z" fill="#666"/></svg>
<svg class="abs" style="left:938.5px;top:737.3px" width="9" height="5" viewBox="0 0 9 5"><path d="M0 0h8.6L4.3 4.4z" fill="#666"/></svg>
<svg class="abs" style="left:1072.3px;top:737.3px" width="9" height="5" viewBox="0 0 9 5"><path d="M0 0h8.6L4.3 4.4z" fill="#666"/></svg>
<div class="abs" style="left:1146px;top:721.7px;width:108px;height:34.3px;background:#fff;border:2px solid #2f6b75;border-radius:7px"></div>
<span class="t" style="left:1174.25px;top:732.00px;font-size:16.7px;color:#38727e;transform:scaleX(0.9129);">CLEAR</span>
<div class="btn" style="left:2082px;width:202.6px"></div>
<svg class="abs" style="left:2104.5px;top:723.3px;z-index:3" width="32" height="25" viewBox="0 0 32 25"><path d="M0.2 0h9v24.4h-9zM11.3 0h9v24.4h-9zM22.2 0h9.2v24.4h-9.2z" fill="#2f6f73"/></svg>
<span class="t" style="left:2149.80px;top:727.90px;font-size:17.6px;color:#35767a;transform:scaleX(0.9109);">TABLE LAYOUT</span>
<div class="btn" style="left:2302.2px;width:216px"></div>
<svg class="abs" style="left:2328px;top:720px;z-index:3" width="25" height="30" viewBox="0 0 25 30"><path d="M7.1 0h10.8v10.2h6.7L12.4 22.4 0.5 10.2h6.6zM0.2 26h24.8v3.5h-24.8z" fill="#2f6f73"/></svg>
<span class="t" style="left:2369.50px;top:727.90px;font-size:17.6px;color:#35767a;transform:scaleX(0.9050);">CSV DOWNLOAD</span>
</div>
<div id="table" style="position:absolute;left:0;top:0;width:2518px;height:1452px;overflow:hidden;z-index:3">
<span class="t" style="left:132.50px;top:802.00px;font-size:17.8px;color:#000;font-weight:700;transform:scaleX(0.9914);">Variant id</span>
<span class="t" style="left:509.00px;top:802.00px;font-size:17.8px;color:#000;font-weight:700;transform:scaleX(0.9273);">Source</span>
<span class="t" style="left:646.00px;top:802.00px;font-size:17.8px;color:#000;font-weight:700;transform:scaleX(0.9383);">Chrom</span>
<span class="t" style="left:750.00px;top:802.00px;font-size:17.8px;color:#000;font-weight:700;transform:scaleX(1.0101);">Start</span>
<span class="t" style="left:869.02px;top:802.00px;font-size:17.8px;color:#000;font-weight:700;transform:scaleX(0.9773);">End</span>
<span class="t" style="left:989.03px;top:802.00px;font-size:17.8px;color:#000;font-weight:700;transform:scaleX(0.9737);">Ref</span>
<span class="t" style="left:1126.50px;top:802.00px;font-size:17.8px;color:#000;font-weight:700;transform:scaleX(0.9882);">Alt</span>
<span class="t" style="left:1263.04px;top:802.00px;font-size:17.8px;color:#000;font-weight:700;transform:scaleX(0.9583);">Length</span>
<span class="t" style="left:1367.03px;top:802.00px;font-size:17.8px;color:#000;font-weight:700;transform:scaleX(0.9665);">Most severe transcript</span>
<span class="t" style="left:1642.00px;top:802.00px;font-size:17.8px;color:#000;font-weight:700;transform:scaleX(0.9462);">Transcript consequences</span>
<span class="t" style="left:2001.50px;top:802.00px;font-size:17.8px;color:#000;font-weight:700;transform:scaleX(0.9585);">Allele Frequency</span>
<span class="t" style="left:2291.48px;top:802.00px;font-size:17.8px;color:#000;font-weight:700;transform:scaleX(1.0223);">rsID</span>
<span class="t" style="left:2498.00px;top:792.60px;font-size:17.8px;color:#000;font-weight:700;transform:scaleX(1.0000);">Clinical</span>
<span class="t" style="left:2498.00px;top:818.60px;font-size:17.8px;color:#000;font-weight:700;transform:scaleX(1.0000);">Significance</span>
<div class="rl" style="left:111px;top:857px"></div>
<div class="rl" style="left:111px;top:885px"></div>
<div class="rl" style="left:111px;top:913px"></div>
<div class="rl" style="left:111px;top:941px"></div>
<div class="rl" style="left:111px;top:969px"></div>
<div class="rl" style="left:111px;top:997px"></div>
<div class="rl" style="left:111px;top:1025px"></div>
<div class="rl" style="left:111px;top:1052px"></div>
<div class="rl" style="left:111px;top:1080px"></div>
<div class="rl" style="left:111px;top:1108px"></div>
<div class="rl" style="left:111px;top:1136px"></div>
<div class="rl" style="left:111px;top:1164px"></div>
<div class="rl" style="left:111px;top:1192px"></div>
<div class="rl" style="left:111px;top:1220px"></div>
<div class="rl" style="left:111px;top:1247px"></div>
<div class="rl" style="left:111px;top:1275px"></div>
<div class="rl" style="left:111px;top:1303px"></div>
<div class="rl" style="left:111px;top:1331px"></div>
<div class="rl" style="left:111px;top:1359px"></div>
<div class="rl" style="left:111px;top:1387px"></div>
<div class="rl" style="left:111px;top:1415px"></div>
<div class="rl" style="left:111px;top:1443px"></div>
<div class="rl" style="left:111px;top:1470px"></div>
<div class="g" style="left:518px;top:859px;height:26px"></div>
<div class="g" style="left:518px;top:887px;height:26px"></div>
<div class="g" style="left:518px;top:915px;height:26px"></div>
<div class="g" style="left:518px;top:943px;height:26px"></div>
<div class="g" style="left:518px;top:971px;height:26px"></div>
<div class="g" style="left:518px;top:999px;height:26px"></div>
<div class="g" style="left:518px;top:1027px;height:25px"></div>
<div class="g" style="left:518px;top:1054px;height:26px"></div>
<div class="g" style="left:518px;top:1082px;height:26px"></div>
<div class="g" style="left:518px;top:1110px;height:26px"></div>
<div class="g" style="left:518px;top:1138px;height:26px"></div>
<div class="g" style="left:518px;top:1166px;height:26px"></div>
<div class="g" style="left:518px;top:1194px;height:26px"></div>
<div class="g" style="left:518px;top:1222px;height:25px"></div>
<div class="g" style="left:518px;top:1249px;height:26px"></div>
<div class="g" style="left:518px;top:1277px;height:26px"></div>
<div class="g" style="left:518px;top:1305px;height:26px"></div>
<div class="g" style="left:518px;top:1333px;height:26px"></div>
<div class="g" style="left:518px;top:1361px;height:26px"></div>
<div class="g" style="left:518px;top:1389px;height:26px"></div>
<div class="g" style="left:518px;top:1417px;height:26px"></div>
<div class="g" style="left:518px;top:1445px;height:25px"></div>
<a class="t u" style="left:131.90px;top:866.30px;font-size:16.6px;color:#38727e;transform:scaleX(1.1832);">7-117474979-</a><a class="t u" style="left:252.71px;top:866.30px;font-size:16.6px;color:#38727e;transform:scaleX(0.8775);">G-</a><a class="t u" style="left:268.89px;top:866.30px;font-size:16.6px;color:#38727e;transform:scaleX(0.9945);">T</a>
<span class="t" style="left:526.40px;top:866.30px;font-size:16.6px;color:#707070;transform:scaleX(0.9000);">G</span>
<span class="t" style="left:646.30px;top:866.30px;font-size:16.6px;color:#707070;transform:scaleX(1.0750);">chr</span><span class="t" style="left:671.08px;top:866.30px;font-size:16.6px;color:#707070;transform:scaleX(1.1600);">7</span>
<span class="t" style="left:748.44px;top:866.30px;font-size:16.6px;color:#707070;transform:scaleX(1.1600);">117474979</span>
<span class="t" style="left:868.44px;top:866.30px;font-size:16.6px;color:#707070;transform:scaleX(1.1600);">117474979</span>
<span class="t" style="left:989.60px;top:866.30px;font-size:16.6px;color:#707070;transform:scaleX(0.9000);">G</span>
<span class="t" style="left:1126.60px;top:866.30px;font-size:16.6px;color:#707070;transform:scaleX(1.0200);">T</span>
<span class="t" style="left:1264.00px;top:866.30px;font-size:16.6px;color:#707070;transform:scaleX(1.1600);">0</span>
<a class="t u" style="left:1366.09px;top:866.30px;font-size:16.6px;color:#38727e;transform:scaleX(0.9108);">ENST</a><a class="t u" style="left:1406.40px;top:866.30px;font-size:16.6px;color:#38727e;transform:scaleX(1.1484);">00000546407.1</a>
<span class="t" style="left:1639.42px;top:866.30px;font-size:16.6px;color:#707070;transform:scaleX(1.0750);">intron_variant, non_coding_transcr...</span>
<span class="t" style="left:1999.40px;top:866.30px;font-size:16.6px;color:#707070;transform:scaleX(1.1600);">4.37</span><span class="t" style="left:2036.86px;top:866.30px;font-size:16.6px;color:#707070;transform:scaleX(1.0750);">e-</span><span class="t" style="left:2052.72px;top:866.30px;font-size:16.6px;color:#707070;transform:scaleX(1.1600);">4</span>
<a class="t u" style="left:131.90px;top:894.17px;font-size:16.6px;color:#38727e;transform:scaleX(1.1832);">7-117475202-</a><a class="t u" style="left:252.71px;top:894.17px;font-size:16.6px;color:#38727e;transform:scaleX(0.8287);">C-</a><a class="t u" style="left:267.22px;top:894.17px;font-size:16.6px;color:#38727e;transform:scaleX(0.9945);">T</a>
<span class="t" style="left:526.40px;top:894.17px;font-size:16.6px;color:#707070;transform:scaleX(0.9000);">G</span>
<span class="t" style="left:646.30px;top:894.17px;font-size:16.6px;color:#707070;transform:scaleX(1.0750);">chr</span><span class="t" style="left:671.08px;top:894.17px;font-size:16.6px;color:#707070;transform:scaleX(1.1600);">7</span>
<span class="t" style="left:748.44px;top:894.17px;font-size:16.6px;color:#707070;transform:scaleX(1.1600);">117475202</span>
<span class="t" style="left:868.44px;top:894.17px;font-size:16.6px;color:#707070;transform:scaleX(1.1600);">117475202</span>
<span class="t" style="left:989.60px;top:894.17px;font-size:16.6px;color:#707070;transform:scaleX(0.8500);">C</span>
<span class="t" style="left:1126.60px;top:894.17px;font-size:16.6px;color:#707070;transform:scaleX(1.0200);">T</span>
<span class="t" style="left:1264.00px;top:894.17px;font-size:16.6px;color:#707070;transform:scaleX(1.1600);">0</span>
<a class="t u" style="left:1366.09px;top:894.17px;font-size:16.6px;color:#38727e;transform:scaleX(0.9108);">ENST</a><a class="t u" style="left:1406.40px;top:894.17px;font-size:16.6px;color:#38727e;transform:scaleX(1.1484);">00000546407.1</a>
<span class="t" style="left:1639.42px;top:894.17px;font-size:16.6px;color:#707070;transform:scaleX(1.0750);">intron_variant, non_coding_transcr...</span>
<span class="t" style="left:1999.40px;top:894.17px;font-size:16.6px;color:#707070;transform:scaleX(1.1600);">4.65</span><span class="t" style="left:2036.86px;top:894.17px;font-size:16.6px;color:#707070;transform:scaleX(1.0750);">e-</span><span class="t" style="left:2052.72px;top:894.17px;font-size:16.6px;color:#707070;transform:scaleX(1.1600);">1</span>
<a class="t u" style="left:2290.94px;top:894.17px;font-size:16.6px;color:#38727e;transform:scaleX(1.0589);">rs</a><a class="t u" style="left:2305.58px;top:894.17px;font-size:16.6px;color:#38727e;transform:scaleX(1.1426);">713134</a>
<a class="t u" style="left:131.90px;top:922.04px;font-size:16.6px;color:#38727e;transform:scaleX(1.1832);">7-117475211-</a><a class="t u" style="left:251.25px;top:922.04px;font-size:16.6px;color:#38727e;transform:scaleX(0.9945);">T-</a><a class="t u" style="left:265.92px;top:922.04px;font-size:16.6px;color:#38727e;transform:scaleX(0.8287);">C</a>
<span class="t" style="left:526.40px;top:922.04px;font-size:16.6px;color:#707070;transform:scaleX(0.9000);">G</span>
<span class="t" style="left:646.30px;top:922.04px;font-size:16.6px;color:#707070;transform:scaleX(1.0750);">chr</span><span class="t" style="left:671.08px;top:922.04px;font-size:16.6px;color:#707070;transform:scaleX(1.1600);">7</span>
<span class="t" style="left:748.44px;top:922.04px;font-size:16.6px;color:#707070;transform:scaleX(1.1600);">117475211</span>
<span class="t" style="left:868.44px;top:922.04px;font-size:16.6px;color:#707070;transform:scaleX(1.1600);">117475211</span>
<span class="t" style="left:989.60px;top:922.04px;font-size:16.6px;color:#707070;transform:scaleX(1.0200);">T</span>
<span class="t" style="left:1126.60px;top:922.04px;font-size:16.6px;color:#707070;transform:scaleX(0.8500);">C</span>
<span class="t" style="left:1264.00px;top:922.04px;font-size:16.6px;color:#707070;transform:scaleX(1.1600);">0</span>
<a class="t u" style="left:1366.09px;top:922.04px;font-size:16.6px;color:#38727e;transform:scaleX(0.9108);">ENST</a><a class="t u" style="left:1406.40px;top:922.04px;font-size:16.6px;color:#38727e;transform:scaleX(1.1484);">00000546407.1</a>
<span class="t" style="left:1639.42px;top:922.04px;font-size:16.6px;color:#707070;transform:scaleX(1.0750);">intron_variant, non_coding_transcr...</span>
<span class="t" style="left:1999.40px;top:922.04px;font-size:16.6px;color:#707070;transform:scaleX(1.1600);">4.17</span><span class="t" style="left:2036.86px;top:922.04px;font-size:16.6px;color:#707070;transform:scaleX(1.0750);">e-</span><span class="t" style="left:2052.72px;top:922.04px;font-size:16.6px;color:#707070;transform:scaleX(1.1600);">4</span>
<a class="t u" style="left:2290.94px;top:922.04px;font-size:16.6px;color:#38727e;transform:scaleX(1.0589);">rs</a><a class="t u" style="left:2305.58px;top:922.04px;font-size:16.6px;color:#38727e;transform:scaleX(1.1426);">568766992</a>
<a class="t u" style="left:131.90px;top:949.91px;font-size:16.6px;color:#38727e;transform:scaleX(1.1832);">7-117475439-</a><a class="t u" style="left:252.71px;top:949.91px;font-size:16.6px;color:#38727e;transform:scaleX(0.9068);">A-</a><a class="t u" style="left:267.76px;top:949.91px;font-size:16.6px;color:#38727e;transform:scaleX(0.9945);">T</a>
<span class="t" style="left:526.40px;top:949.91px;font-size:16.6px;color:#707070;transform:scaleX(0.9000);">G</span>
<span class="t" style="left:646.30px;top:949.91px;font-size:16.6px;color:#707070;transform:scaleX(1.0750);">chr</span><span class="t" style="left:671.08px;top:949.91px;font-size:16.6px;color:#707070;transform:scaleX(1.1600);">7</span>
<span class="t" style="left:748.44px;top:949.91px;font-size:16.6px;color:#707070;transform:scaleX(1.1600);">117475439</span>
<span class="t" style="left:868.44px;top:949.91px;font-size:16.6px;color:#707070;transform:scaleX(1.1600);">117475439</span>
<span class="t" style="left:989.60px;top:949.91px;font-size:16.6px;color:#707070;transform:scaleX(0.9300);">A</span>
<span class="t" style="left:1126.60px;top:949.91px;font-size:16.6px;color:#707070;transform:scaleX(1.0200);">T</span>
<span class="t" style="left:1264.00px;top:949.91px;font-size:16.6px;color:#707070;transform:scaleX(1.1600);">0</span>
<a class="t u" style="left:1366.09px;top:949.91px;font-size:16.6px;color:#38727e;transform:scaleX(0.9108);">ENST</a><a class="t u" style="left:1406.40px;top:949.91px;font-size:16.6px;color:#38727e;transform:scaleX(1.1484);">00000546407.1</a>
<span class="t" style="left:1639.42px;top:949.91px;font-size:16.6px;color:#707070;transform:scaleX(1.0750);">intron_variant, non_coding_transcr...</span>
<span class="t" style="left:1999.40px;top:949.91px;font-size:16.6px;color:#707070;transform:scaleX(1.1600);">4.12</span><span class="t" style="left:2036.86px;top:949.91px;font-size:16.6px;color:#707070;transform:scaleX(1.0750);">e-</span><span class="t" style="left:2052.72px;top:949.91px;font-size:16.6px;color:#707070;transform:scaleX(1.1600);">4</span>
<a class="t u" style="left:131.90px;top:977.78px;font-size:16.6px;color:#38727e;transform:scaleX(1.1832);">7-117475506-</a><a class="t u" style="left:252.71px;top:977.78px;font-size:16.6px;color:#38727e;transform:scaleX(0.9068);">A-A</a><a class="t u" style="left:277.79px;top:977.78px;font-size:16.6px;color:#38727e;transform:scaleX(0.9945);">T</a>
<span class="t" style="left:526.40px;top:977.78px;font-size:16.6px;color:#707070;transform:scaleX(0.9000);">G</span>
<span class="t" style="left:646.30px;top:977.78px;font-size:16.6px;color:#707070;transform:scaleX(1.0750);">chr</span><span class="t" style="left:671.08px;top:977.78px;font-size:16.6px;color:#707070;transform:scaleX(1.1600);">7</span>
<span class="t" style="left:748.44px;top:977.78px;font-size:16.6px;color:#707070;transform:scaleX(1.1600);">117475506</span>
<span class="t" style="left:868.44px;top:977.78px;font-size:16.6px;color:#707070;transform:scaleX(1.1600);">117475506</span>
<span class="t" style="left:989.60px;top:977.78px;font-size:16.6px;color:#707070;transform:scaleX(0.9300);">A</span>
<span class="t" style="left:1126.60px;top:977.78px;font-size:16.6px;color:#707070;transform:scaleX(0.9300);">A</span><span class="t" style="left:1136.89px;top:977.78px;font-size:16.6px;color:#707070;transform:scaleX(1.0200);">T</span>
<span class="t" style="left:1264.00px;top:977.78px;font-size:16.6px;color:#707070;transform:scaleX(1.1600);">0</span>
<a class="t u" style="left:1366.09px;top:977.78px;font-size:16.6px;color:#38727e;transform:scaleX(0.9108);">ENST</a><a class="t u" style="left:1406.40px;top:977.78px;font-size:16.6px;color:#38727e;transform:scaleX(1.1484);">00000546407.1</a>
<span class="t" style="left:1639.42px;top:977.78px;font-size:16.6px;color:#707070;transform:scaleX(1.0750);">intron_variant, non_coding_transcr...</span>
<span class="t" style="left:1999.40px;top:977.78px;font-size:16.6px;color:#707070;transform:scaleX(1.1600);">3.18</span><span class="t" style="left:2036.86px;top:977.78px;font-size:16.6px;color:#707070;transform:scaleX(1.0750);">e-</span><span class="t" style="left:2052.72px;top:977.78px;font-size:16.6px;color:#707070;transform:scaleX(1.1600);">1</span>
<a class="t u" style="left:2290.94px;top:977.78px;font-size:16.6px;color:#38727e;transform:scaleX(1.0589);">rs</a><a class="t u" style="left:2305.58px;top:977.78px;font-size:16.6px;color:#38727e;transform:scaleX(1.1426);">398067205</a>
<a class="t u" style="left:131.90px;top:1005.65px;font-size:16.6px;color:#38727e;transform:scaleX(1.1832);">7-117475506-</a><a class="t u" style="left:252.71px;top:1005.65px;font-size:16.6px;color:#38727e;transform:scaleX(0.9068);">A-A</a><a class="t u" style="left:277.79px;top:1005.65px;font-size:16.6px;color:#38727e;transform:scaleX(0.9945);">TT</a>
<span class="t" style="left:526.40px;top:1005.65px;font-size:16.6px;color:#707070;transform:scaleX(0.9000);">G</span>
<span class="t" style="left:646.30px;top:1005.65px;font-size:16.6px;color:#707070;transform:scaleX(1.0750);">chr</span><span class="t" style="left:671.08px;top:1005.65px;font-size:16.6px;color:#707070;transform:scaleX(1.1600);">7</span>
<span class="t" style="left:748.44px;top:1005.65px;font-size:16.6px;color:#707070;transform:scaleX(1.1600);">117475506</span>
<span class="t" style="left:868.44px;top:1005.65px;font-size:16.6px;color:#707070;transform:scaleX(1.1600);">117475506</span>
<span class="t" style="left:989.60px;top:1005.65px;font-size:16.6px;color:#707070;transform:scaleX(0.9300);">A</span>
<span class="t" style="left:1126.60px;top:1005.65px;font-size:16.6px;color:#707070;transform:scaleX(0.9300);">A</span><span class="t" style="left:1136.89px;top:1005.65px;font-size:16.6px;color:#707070;transform:scaleX(1.0200);">TT</span>
<span class="t" style="left:1264.00px;top:1005.65px;font-size:16.6px;color:#707070;transform:scaleX(1.1600);">0</span>
<a class="t u" style="left:1366.09px;top:1005.65px;font-size:16.6px;color:#38727e;transform:scaleX(0.9108);">ENST</a><a class="t u" style="left:1406.40px;top:1005.65px;font-size:16.6px;color:#38727e;transform:scaleX(1.1484);">00000546407.1</a>
<span class="t" style="left:1639.42px;top:1005.65px;font-size:16.6px;color:#707070;transform:scaleX(1.0750);">intron_variant, non_coding_transcr...</span>
<span class="t" style="left:1998.24px;top:1005.65px;font-size:16.6px;color:#707070;transform:scaleX(1.1600);">1.51</span><span class="t" style="left:2035.70px;top:1005.65px;font-size:16.6px;color:#707070;transform:scaleX(1.0750);">e-</span><span class="t" style="left:2051.56px;top:1005.65px;font-size:16.6px;color:#707070;transform:scaleX(1.1600);">1</span>
<a class="t u" style="left:2290.94px;top:1005.65px;font-size:16.6px;color:#38727e;transform:scaleX(1.0589);">rs</a><a class="t u" style="left:2305.58px;top:1005.65px;font-size:16.6px;color:#38727e;transform:scaleX(1.1426);">398067205</a>
<a class="t u" style="left:131.90px;top:1033.52px;font-size:16.6px;color:#38727e;transform:scaleX(1.1832);">7-117475523-</a><a class="t u" style="left:252.71px;top:1033.52px;font-size:16.6px;color:#38727e;transform:scaleX(0.8775);">G-</a><a class="t u" style="left:268.89px;top:1033.52px;font-size:16.6px;color:#38727e;transform:scaleX(0.8287);">C</a>
<span class="t" style="left:526.40px;top:1033.52px;font-size:16.6px;color:#707070;transform:scaleX(0.9000);">G</span>
<span class="t" style="left:646.30px;top:1033.52px;font-size:16.6px;color:#707070;transform:scaleX(1.0750);">chr</span><span class="t" style="left:671.08px;top:1033.52px;font-size:16.6px;color:#707070;transform:scaleX(1.1600);">7</span>
<span class="t" style="left:748.44px;top:1033.52px;font-size:16.6px;color:#707070;transform:scaleX(1.1600);">117475523</span>
<span class="t" style="left:868.44px;top:1033.52px;font-size:16.6px;color:#707070;transform:scaleX(1.1600);">117475523</span>
<span class="t" style="left:989.60px;top:1033.52px;font-size:16.6px;color:#707070;transform:scaleX(0.9000);">G</span>
<span class="t" style="left:1126.60px;top:1033.52px;font-size:16.6px;color:#707070;transform:scaleX(0.8500);">C</span>
<span class="t" style="left:1264.00px;top:1033.52px;font-size:16.6px;color:#707070;transform:scaleX(1.1600);">0</span>
<a class="t u" style="left:1366.09px;top:1033.52px;font-size:16.6px;color:#38727e;transform:scaleX(0.9108);">ENST</a><a class="t u" style="left:1406.40px;top:1033.52px;font-size:16.6px;color:#38727e;transform:scaleX(1.1484);">00000546407.1</a>
<span class="t" style="left:1639.42px;top:1033.52px;font-size:16.6px;color:#707070;transform:scaleX(1.0750);">intron_variant, non_coding_transcr...</span>
<span class="t" style="left:1999.40px;top:1033.52px;font-size:16.6px;color:#707070;transform:scaleX(1.1600);">4.26</span><span class="t" style="left:2036.86px;top:1033.52px;font-size:16.6px;color:#707070;transform:scaleX(1.0750);">e-</span><span class="t" style="left:2052.72px;top:1033.52px;font-size:16.6px;color:#707070;transform:scaleX(1.1600);">4</span>
<a class="t u" style="left:131.90px;top:1061.39px;font-size:16.6px;color:#38727e;transform:scaleX(1.1832);">7-117475606-</a><a class="t u" style="left:252.71px;top:1061.39px;font-size:16.6px;color:#38727e;transform:scaleX(0.8775);">G-</a><a class="t u" style="left:268.89px;top:1061.39px;font-size:16.6px;color:#38727e;transform:scaleX(0.9068);">A</a>
<span class="t" style="left:526.40px;top:1061.39px;font-size:16.6px;color:#707070;transform:scaleX(0.9000);">G</span>
<span class="t" style="left:646.30px;top:1061.39px;font-size:16.6px;color:#707070;transform:scaleX(1.0750);">chr</span><span class="t" style="left:671.08px;top:1061.39px;font-size:16.6px;color:#707070;transform:scaleX(1.1600);">7</span>
<span class="t" style="left:748.44px;top:1061.39px;font-size:16.6px;color:#707070;transform:scaleX(1.1600);">117475606</span>
<span class="t" style="left:868.44px;top:1061.39px;font-size:16.6px;color:#707070;transform:scaleX(1.1600);">117475606</span>
<span class="t" style="left:989.60px;top:1061.39px;font-size:16.6px;color:#707070;transform:scaleX(0.9000);">G</span>
<span class="t" style="left:1126.60px;top:1061.39px;font-size:16.6px;color:#707070;transform:scaleX(0.9300);">A</span>
<span class="t" style="left:1264.00px;top:1061.39px;font-size:16.6px;color:#707070;transform:scaleX(1.1600);">0</span>
<a class="t u" style="left:1366.09px;top:1061.39px;font-size:16.6px;color:#38727e;transform:scaleX(0.9108);">ENST</a><a class="t u" style="left:1406.40px;top:1061.39px;font-size:16.6px;color:#38727e;transform:scaleX(1.1484);">00000546407.1</a>
<span class="t" style="left:1639.42px;top:1061.39px;font-size:16.6px;color:#707070;transform:scaleX(1.0750);">intron_variant, non_coding_transcr...</span>
<span class="t" style="left:1999.40px;top:1061.39px;font-size:16.6px;color:#707070;transform:scaleX(1.1600);">3.90</span><span class="t" style="left:2036.86px;top:1061.39px;font-size:16.6px;color:#707070;transform:scaleX(1.0750);">e-</span><span class="t" style="left:2052.72px;top:1061.39px;font-size:16.6px;color:#707070;transform:scaleX(1.1600);">4</span>
<a class="t u" style="left:131.90px;top:1089.26px;font-size:16.6px;color:#38727e;transform:scaleX(1.1832);">7-117475617-</a><a class="t u" style="left:252.71px;top:1089.26px;font-size:16.6px;color:#38727e;transform:scaleX(0.8775);">G-</a><a class="t u" style="left:268.89px;top:1089.26px;font-size:16.6px;color:#38727e;transform:scaleX(0.9945);">T</a>
<span class="t" style="left:526.40px;top:1089.26px;font-size:16.6px;color:#707070;transform:scaleX(0.9000);">G</span>
<span class="t" style="left:646.30px;top:1089.26px;font-size:16.6px;color:#707070;transform:scaleX(1.0750);">chr</span><span class="t" style="left:671.08px;top:1089.26px;font-size:16.6px;color:#707070;transform:scaleX(1.1600);">7</span>
<span class="t" style="left:748.44px;top:1089.26px;font-size:16.6px;color:#707070;transform:scaleX(1.1600);">117475617</span>
<span class="t" style="left:868.44px;top:1089.26px;font-size:16.6px;color:#707070;transform:scaleX(1.1600);">117475617</span>
<span class="t" style="left:989.60px;top:1089.26px;font-size:16.6px;color:#707070;transform:scaleX(0.9000);">G</span>
<span class="t" style="left:1126.60px;top:1089.26px;font-size:16.6px;color:#707070;transform:scaleX(1.0200);">T</span>
<span class="t" style="left:1264.00px;top:1089.26px;font-size:16.6px;color:#707070;transform:scaleX(1.1600);">0</span>
<a class="t u" style="left:1366.09px;top:1089.26px;font-size:16.6px;color:#38727e;transform:scaleX(0.9108);">ENST</a><a class="t u" style="left:1406.40px;top:1089.26px;font-size:16.6px;color:#38727e;transform:scaleX(1.1484);">00000546407.1</a>
<span class="t" style="left:1639.42px;top:1089.26px;font-size:16.6px;color:#707070;transform:scaleX(1.0750);">intron_variant, non_coding_transcr...</span>
<span class="t" style="left:1999.40px;top:1089.26px;font-size:16.6px;color:#707070;transform:scaleX(1.1600);">3.93</span><span class="t" style="left:2036.86px;top:1089.26px;font-size:16.6px;color:#707070;transform:scaleX(1.0750);">e-</span><span class="t" style="left:2052.72px;top:1089.26px;font-size:16.6px;color:#707070;transform:scaleX(1.1600);">4</span>
<a class="t u" style="left:131.90px;top:1117.13px;font-size:16.6px;color:#38727e;transform:scaleX(1.1832);">7-117475796-</a><a class="t u" style="left:252.71px;top:1117.13px;font-size:16.6px;color:#38727e;transform:scaleX(0.8775);">G-</a><a class="t u" style="left:268.89px;top:1117.13px;font-size:16.6px;color:#38727e;transform:scaleX(0.8287);">C</a>
<span class="t" style="left:526.40px;top:1117.13px;font-size:16.6px;color:#707070;transform:scaleX(0.9000);">G</span>
<span class="t" style="left:646.30px;top:1117.13px;font-size:16.6px;color:#707070;transform:scaleX(1.0750);">chr</span><span class="t" style="left:671.08px;top:1117.13px;font-size:16.6px;color:#707070;transform:scaleX(1.1600);">7</span>
<span class="t" style="left:748.44px;top:1117.13px;font-size:16.6px;color:#707070;transform:scaleX(1.1600);">117475796</span>
<span class="t" style="left:868.44px;top:1117.13px;font-size:16.6px;color:#707070;transform:scaleX(1.1600);">117475796</span>
<span class="t" style="left:989.60px;top:1117.13px;font-size:16.6px;color:#707070;transform:scaleX(0.9000);">G</span>
<span class="t" style="left:1126.60px;top:1117.13px;font-size:16.6px;color:#707070;transform:scaleX(0.8500);">C</span>
<span class="t" style="left:1264.00px;top:1117.13px;font-size:16.6px;color:#707070;transform:scaleX(1.1600);">0</span>
<a class="t u" style="left:1366.09px;top:1117.13px;font-size:16.6px;color:#38727e;transform:scaleX(0.9108);">ENST</a><a class="t u" style="left:1406.40px;top:1117.13px;font-size:16.6px;color:#38727e;transform:scaleX(1.1484);">00000546407.1</a>
<span class="t" style="left:1639.42px;top:1117.13px;font-size:16.6px;color:#707070;transform:scaleX(1.0750);">non_coding_transcript_exon_variant</span>
<span class="t" style="left:1999.40px;top:1117.13px;font-size:16.6px;color:#707070;transform:scaleX(1.1600);">3.97</span><span class="t" style="left:2036.86px;top:1117.13px;font-size:16.6px;color:#707070;transform:scaleX(1.0750);">e-</span><span class="t" style="left:2052.72px;top:1117.13px;font-size:16.6px;color:#707070;transform:scaleX(1.1600);">4</span>
<a class="t u" style="left:2290.94px;top:1117.13px;font-size:16.6px;color:#38727e;transform:scaleX(1.0589);">rs</a><a class="t u" style="left:2305.58px;top:1117.13px;font-size:16.6px;color:#38727e;transform:scaleX(1.1426);">569204174</a>
<a class="t u" style="left:131.90px;top:1145.00px;font-size:16.6px;color:#38727e;transform:scaleX(1.1832);">7-117475813-</a><a class="t u" style="left:252.71px;top:1145.00px;font-size:16.6px;color:#38727e;transform:scaleX(0.8775);">G-</a><a class="t u" style="left:268.89px;top:1145.00px;font-size:16.6px;color:#38727e;transform:scaleX(0.9945);">T</a>
<span class="t" style="left:526.40px;top:1145.00px;font-size:16.6px;color:#707070;transform:scaleX(0.9000);">G</span>
<span class="t" style="left:646.30px;top:1145.00px;font-size:16.6px;color:#707070;transform:scaleX(1.0750);">chr</span><span class="t" style="left:671.08px;top:1145.00px;font-size:16.6px;color:#707070;transform:scaleX(1.1600);">7</span>
<span class="t" style="left:748.44px;top:1145.00px;font-size:16.6px;color:#707070;transform:scaleX(1.1600);">117475813</span>
<span class="t" style="left:868.44px;top:1145.00px;font-size:16.6px;color:#707070;transform:scaleX(1.1600);">117475813</span>
<span class="t" style="left:989.60px;top:1145.00px;font-size:16.6px;color:#707070;transform:scaleX(0.9000);">G</span>
<span class="t" style="left:1126.60px;top:1145.00px;font-size:16.6px;color:#707070;transform:scaleX(1.0200);">T</span>
<span class="t" style="left:1264.00px;top:1145.00px;font-size:16.6px;color:#707070;transform:scaleX(1.1600);">0</span>
<a class="t u" style="left:1366.09px;top:1145.00px;font-size:16.6px;color:#38727e;transform:scaleX(0.9108);">ENST</a><a class="t u" style="left:1406.40px;top:1145.00px;font-size:16.6px;color:#38727e;transform:scaleX(1.1484);">00000546407.1</a>
<span class="t" style="left:1640.50px;top:1145.00px;font-size:16.6px;color:#707070;transform:scaleX(1.0750);">splice_region_variant, intron_vari...</span>
<span class="t" style="left:1999.40px;top:1145.00px;font-size:16.6px;color:#707070;transform:scaleX(1.1600);">3.99</span><span class="t" style="left:2036.86px;top:1145.00px;font-size:16.6px;color:#707070;transform:scaleX(1.0750);">e-</span><span class="t" style="left:2052.72px;top:1145.00px;font-size:16.6px;color:#707070;transform:scaleX(1.1600);">4</span>
<a class="t u" style="left:2290.94px;top:1145.00px;font-size:16.6px;color:#38727e;transform:scaleX(1.0589);">rs</a><a class="t u" style="left:2305.58px;top:1145.00px;font-size:16.6px;color:#38727e;transform:scaleX(1.1426);">530099256</a>
<a class="t u" style="left:131.90px;top:1172.87px;font-size:16.6px;color:#38727e;transform:scaleX(1.1832);">7-117476059-</a><a class="t u" style="left:252.71px;top:1172.87px;font-size:16.6px;color:#38727e;transform:scaleX(0.9945);">T</a><a class="t u" style="left:262.79px;top:1172.87px;font-size:16.6px;color:#38727e;transform:scaleX(0.8775);">G-</a><a class="t u" style="left:278.97px;top:1172.87px;font-size:16.6px;color:#38727e;transform:scaleX(0.9945);">T</a>
<span class="t" style="left:526.40px;top:1172.87px;font-size:16.6px;color:#707070;transform:scaleX(0.9000);">G</span>
<span class="t" style="left:646.30px;top:1172.87px;font-size:16.6px;color:#707070;transform:scaleX(1.0750);">chr</span><span class="t" style="left:671.08px;top:1172.87px;font-size:16.6px;color:#707070;transform:scaleX(1.1600);">7</span>
<span class="t" style="left:748.44px;top:1172.87px;font-size:16.6px;color:#707070;transform:scaleX(1.1600);">117476059</span>
<span class="t" style="left:868.44px;top:1172.87px;font-size:16.6px;color:#707070;transform:scaleX(1.1600);">117476059</span>
<span class="t" style="left:989.60px;top:1172.87px;font-size:16.6px;color:#707070;transform:scaleX(1.0200);">T</span><span class="t" style="left:999.94px;top:1172.87px;font-size:16.6px;color:#707070;transform:scaleX(0.9000);">G</span>
<span class="t" style="left:1126.60px;top:1172.87px;font-size:16.6px;color:#707070;transform:scaleX(1.0200);">T</span>
<span class="t" style="left:1264.00px;top:1172.87px;font-size:16.6px;color:#707070;transform:scaleX(1.1600);">0</span>
<a class="t u" style="left:1366.09px;top:1172.87px;font-size:16.6px;color:#38727e;transform:scaleX(0.9108);">ENST</a><a class="t u" style="left:1406.40px;top:1172.87px;font-size:16.6px;color:#38727e;transform:scaleX(1.1484);">00000546407.1</a>
<span class="t" style="left:1639.42px;top:1172.87px;font-size:16.6px;color:#707070;transform:scaleX(1.0750);">intron_variant, non_coding_transcr...</span>
<span class="t" style="left:1999.40px;top:1172.87px;font-size:16.6px;color:#707070;transform:scaleX(1.1600);">4.02</span><span class="t" style="left:2036.86px;top:1172.87px;font-size:16.6px;color:#707070;transform:scaleX(1.0750);">e-</span><span class="t" style="left:2052.72px;top:1172.87px;font-size:16.6px;color:#707070;transform:scaleX(1.1600);">4</span>
<a class="t u" style="left:2290.94px;top:1172.87px;font-size:16.6px;color:#38727e;transform:scaleX(1.0589);">rs</a><a class="t u" style="left:2305.58px;top:1172.87px;font-size:16.6px;color:#38727e;transform:scaleX(1.1426);">982887154</a>
<a class="t u" style="left:131.90px;top:1200.74px;font-size:16.6px;color:#38727e;transform:scaleX(1.1832);">7-117476129-</a><a class="t u" style="left:252.71px;top:1200.74px;font-size:16.6px;color:#38727e;transform:scaleX(0.9945);">T-</a><a class="t u" style="left:267.38px;top:1200.74px;font-size:16.6px;color:#38727e;transform:scaleX(0.8287);">C</a>
<span class="t" style="left:526.40px;top:1200.74px;font-size:16.6px;color:#707070;transform:scaleX(0.9000);">G</span>
<span class="t" style="left:646.30px;top:1200.74px;font-size:16.6px;color:#707070;transform:scaleX(1.0750);">chr</span><span class="t" style="left:671.08px;top:1200.74px;font-size:16.6px;color:#707070;transform:scaleX(1.1600);">7</span>
<span class="t" style="left:748.44px;top:1200.74px;font-size:16.6px;color:#707070;transform:scaleX(1.1600);">117476129</span>
<span class="t" style="left:868.44px;top:1200.74px;font-size:16.6px;color:#707070;transform:scaleX(1.1600);">117476129</span>
<span class="t" style="left:989.60px;top:1200.74px;font-size:16.6px;color:#707070;transform:scaleX(1.0200);">T</span>
<span class="t" style="left:1126.60px;top:1200.74px;font-size:16.6px;color:#707070;transform:scaleX(0.8500);">C</span>
<span class="t" style="left:1264.00px;top:1200.74px;font-size:16.6px;color:#707070;transform:scaleX(1.1600);">0</span>
<a class="t u" style="left:1366.09px;top:1200.74px;font-size:16.6px;color:#38727e;transform:scaleX(0.9108);">ENST</a><a class="t u" style="left:1406.40px;top:1200.74px;font-size:16.6px;color:#38727e;transform:scaleX(1.1484);">00000546407.1</a>
<span class="t" style="left:1639.42px;top:1200.74px;font-size:16.6px;color:#707070;transform:scaleX(1.0750);">intron_variant, non_coding_transcr...</span>
<span class="t" style="left:1999.40px;top:1200.74px;font-size:16.6px;color:#707070;transform:scaleX(1.1600);">4.63</span><span class="t" style="left:2036.86px;top:1200.74px;font-size:16.6px;color:#707070;transform:scaleX(1.0750);">e-</span><span class="t" style="left:2052.72px;top:1200.74px;font-size:16.6px;color:#707070;transform:scaleX(1.1600);">1</span>
<a class="t u" style="left:2290.94px;top:1200.74px;font-size:16.6px;color:#38727e;transform:scaleX(1.0589);">rs</a><a class="t u" style="left:2305.58px;top:1200.74px;font-size:16.6px;color:#38727e;transform:scaleX(1.1426);">7810506</a>
<a class="t u" style="left:131.90px;top:1228.61px;font-size:16.6px;color:#38727e;transform:scaleX(1.1832);">7-117476228-</a><a class="t u" style="left:252.71px;top:1228.61px;font-size:16.6px;color:#38727e;transform:scaleX(0.8775);">G-</a><a class="t u" style="left:268.89px;top:1228.61px;font-size:16.6px;color:#38727e;transform:scaleX(0.9068);">A</a>
<span class="t" style="left:526.40px;top:1228.61px;font-size:16.6px;color:#707070;transform:scaleX(0.9000);">G</span>
<span class="t" style="left:646.30px;top:1228.61px;font-size:16.6px;color:#707070;transform:scaleX(1.0750);">chr</span><span class="t" style="left:671.08px;top:1228.61px;font-size:16.6px;color:#707070;transform:scaleX(1.1600);">7</span>
<span class="t" style="left:748.44px;top:1228.61px;font-size:16.6px;color:#707070;transform:scaleX(1.1600);">117476228</span>
<span class="t" style="left:868.44px;top:1228.61px;font-size:16.6px;color:#707070;transform:scaleX(1.1600);">117476228</span>
<span class="t" style="left:989.60px;top:1228.61px;font-size:16.6px;color:#707070;transform:scaleX(0.9000);">G</span>
<span class="t" style="left:1126.60px;top:1228.61px;font-size:16.6px;color:#707070;transform:scaleX(0.9300);">A</span>
<span class="t" style="left:1264.00px;top:1228.61px;font-size:16.6px;color:#707070;transform:scaleX(1.1600);">0</span>
<a class="t u" style="left:1366.09px;top:1228.61px;font-size:16.6px;color:#38727e;transform:scaleX(0.9108);">ENST</a><a class="t u" style="left:1406.40px;top:1228.61px;font-size:16.6px;color:#38727e;transform:scaleX(1.1484);">00000546407.1</a>
<span class="t" style="left:1639.42px;top:1228.61px;font-size:16.6px;color:#707070;transform:scaleX(1.0750);">intron_variant, non_coding_transcr...</span>
<span class="t" style="left:1999.40px;top:1228.61px;font-size:16.6px;color:#707070;transform:scaleX(1.1600);">4.17</span><span class="t" style="left:2036.86px;top:1228.61px;font-size:16.6px;color:#707070;transform:scaleX(1.0750);">e-</span><span class="t" style="left:2052.72px;top:1228.61px;font-size:16.6px;color:#707070;transform:scaleX(1.1600);">4</span>
<a class="t u" style="left:2290.94px;top:1228.61px;font-size:16.6px;color:#38727e;transform:scaleX(1.0589);">rs</a><a class="t u" style="left:2305.58px;top:1228.61px;font-size:16.6px;color:#38727e;transform:scaleX(1.1426);">1209513938</a>
<a class="t u" style="left:131.90px;top:1256.48px;font-size:16.6px;color:#38727e;transform:scaleX(1.1832);">7-117476231-</a><a class="t u" style="left:252.71px;top:1256.48px;font-size:16.6px;color:#38727e;transform:scaleX(0.8287);">C-</a><a class="t u" style="left:267.22px;top:1256.48px;font-size:16.6px;color:#38727e;transform:scaleX(0.9945);">T</a>
<span class="t" style="left:526.40px;top:1256.48px;font-size:16.6px;color:#707070;transform:scaleX(0.9000);">G</span>
<span class="t" style="left:646.30px;top:1256.48px;font-size:16.6px;color:#707070;transform:scaleX(1.0750);">chr</span><span class="t" style="left:671.08px;top:1256.48px;font-size:16.6px;color:#707070;transform:scaleX(1.1600);">7</span>
<span class="t" style="left:748.44px;top:1256.48px;font-size:16.6px;color:#707070;transform:scaleX(1.1600);">117476231</span>
<span class="t" style="left:868.44px;top:1256.48px;font-size:16.6px;color:#707070;transform:scaleX(1.1600);">117476231</span>
<span class="t" style="left:989.60px;top:1256.48px;font-size:16.6px;color:#707070;transform:scaleX(0.8500);">C</span>
<span class="t" style="left:1126.60px;top:1256.48px;font-size:16.6px;color:#707070;transform:scaleX(1.0200);">T</span>
<span class="t" style="left:1264.00px;top:1256.48px;font-size:16.6px;color:#707070;transform:scaleX(1.1600);">0</span>
<a class="t u" style="left:1366.09px;top:1256.48px;font-size:16.6px;color:#38727e;transform:scaleX(0.9108);">ENST</a><a class="t u" style="left:1406.40px;top:1256.48px;font-size:16.6px;color:#38727e;transform:scaleX(1.1484);">00000546407.1</a>
<span class="t" style="left:1639.42px;top:1256.48px;font-size:16.6px;color:#707070;transform:scaleX(1.0750);">intron_variant, non_coding_transcr...</span>
<span class="t" style="left:1999.40px;top:1256.48px;font-size:16.6px;color:#707070;transform:scaleX(1.1600);">4.16</span><span class="t" style="left:2036.86px;top:1256.48px;font-size:16.6px;color:#707070;transform:scaleX(1.0750);">e-</span><span class="t" style="left:2052.72px;top:1256.48px;font-size:16.6px;color:#707070;transform:scaleX(1.1600);">4</span>
<a class="t u" style="left:2290.94px;top:1256.48px;font-size:16.6px;color:#38727e;transform:scaleX(1.0589);">rs</a><a class="t u" style="left:2305.58px;top:1256.48px;font-size:16.6px;color:#38727e;transform:scaleX(1.1426);">577035929</a>
<a class="t u" style="left:131.90px;top:1284.35px;font-size:16.6px;color:#38727e;transform:scaleX(1.1832);">7-117476278-</a><a class="t u" style="left:252.71px;top:1284.35px;font-size:16.6px;color:#38727e;transform:scaleX(0.8775);">G-</a><a class="t u" style="left:268.89px;top:1284.35px;font-size:16.6px;color:#38727e;transform:scaleX(0.9068);">A</a>
<span class="t" style="left:526.40px;top:1284.35px;font-size:16.6px;color:#707070;transform:scaleX(0.9000);">G</span>
<span class="t" style="left:646.30px;top:1284.35px;font-size:16.6px;color:#707070;transform:scaleX(1.0750);">chr</span><span class="t" style="left:671.08px;top:1284.35px;font-size:16.6px;color:#707070;transform:scaleX(1.1600);">7</span>
<span class="t" style="left:748.44px;top:1284.35px;font-size:16.6px;color:#707070;transform:scaleX(1.1600);">117476278</span>
<span class="t" style="left:868.44px;top:1284.35px;font-size:16.6px;color:#707070;transform:scaleX(1.1600);">117476278</span>
<span class="t" style="left:989.60px;top:1284.35px;font-size:16.6px;color:#707070;transform:scaleX(0.9000);">G</span>
<span class="t" style="left:1126.60px;top:1284.35px;font-size:16.6px;color:#707070;transform:scaleX(0.9300);">A</span>
<span class="t" style="left:1264.00px;top:1284.35px;font-size:16.6px;color:#707070;transform:scaleX(1.1600);">0</span>
<a class="t u" style="left:1366.09px;top:1284.35px;font-size:16.6px;color:#38727e;transform:scaleX(0.9108);">ENST</a><a class="t u" style="left:1406.40px;top:1284.35px;font-size:16.6px;color:#38727e;transform:scaleX(1.1484);">00000546407.1</a>
<span class="t" style="left:1639.42px;top:1284.35px;font-size:16.6px;color:#707070;transform:scaleX(1.0750);">intron_variant, non_coding_transcr...</span>
<span class="t" style="left:1999.40px;top:1284.35px;font-size:16.6px;color:#707070;transform:scaleX(1.1600);">4.21</span><span class="t" style="left:2036.86px;top:1284.35px;font-size:16.6px;color:#707070;transform:scaleX(1.0750);">e-</span><span class="t" style="left:2052.72px;top:1284.35px;font-size:16.6px;color:#707070;transform:scaleX(1.1600);">4</span>
<a class="t u" style="left:2290.94px;top:1284.35px;font-size:16.6px;color:#38727e;transform:scaleX(1.0589);">rs</a><a class="t u" style="left:2305.58px;top:1284.35px;font-size:16.6px;color:#38727e;transform:scaleX(1.1426);">1327912685</a>
<a class="t u" style="left:131.90px;top:1312.22px;font-size:16.6px;color:#38727e;transform:scaleX(1.1832);">7-117476408-</a><a class="t u" style="left:252.71px;top:1312.22px;font-size:16.6px;color:#38727e;transform:scaleX(0.8775);">G-</a><a class="t u" style="left:268.89px;top:1312.22px;font-size:16.6px;color:#38727e;transform:scaleX(0.9068);">A</a>
<span class="t" style="left:526.40px;top:1312.22px;font-size:16.6px;color:#707070;transform:scaleX(0.9000);">G</span>
<span class="t" style="left:646.30px;top:1312.22px;font-size:16.6px;color:#707070;transform:scaleX(1.0750);">chr</span><span class="t" style="left:671.08px;top:1312.22px;font-size:16.6px;color:#707070;transform:scaleX(1.1600);">7</span>
<span class="t" style="left:748.44px;top:1312.22px;font-size:16.6px;color:#707070;transform:scaleX(1.1600);">117476408</span>
<span class="t" style="left:868.44px;top:1312.22px;font-size:16.6px;color:#707070;transform:scaleX(1.1600);">117476408</span>
<span class="t" style="left:989.60px;top:1312.22px;font-size:16.6px;color:#707070;transform:scaleX(0.9000);">G</span>
<span class="t" style="left:1126.60px;top:1312.22px;font-size:16.6px;color:#707070;transform:scaleX(0.9300);">A</span>
<span class="t" style="left:1264.00px;top:1312.22px;font-size:16.6px;color:#707070;transform:scaleX(1.1600);">0</span>
<a class="t u" style="left:1366.09px;top:1312.22px;font-size:16.6px;color:#38727e;transform:scaleX(0.9108);">ENST</a><a class="t u" style="left:1406.40px;top:1312.22px;font-size:16.6px;color:#38727e;transform:scaleX(1.1484);">00000546407.1</a>
<span class="t" style="left:1639.42px;top:1312.22px;font-size:16.6px;color:#707070;transform:scaleX(1.0750);">intron_variant, non_coding_transcr...</span>
<span class="t" style="left:1998.24px;top:1312.22px;font-size:16.6px;color:#707070;transform:scaleX(1.1600);">1.25</span><span class="t" style="left:2035.70px;top:1312.22px;font-size:16.6px;color:#707070;transform:scaleX(1.0750);">e-</span><span class="t" style="left:2051.56px;top:1312.22px;font-size:16.6px;color:#707070;transform:scaleX(1.1600);">3</span>
<a class="t u" style="left:2290.94px;top:1312.22px;font-size:16.6px;color:#38727e;transform:scaleX(1.0589);">rs</a><a class="t u" style="left:2305.58px;top:1312.22px;font-size:16.6px;color:#38727e;transform:scaleX(1.1426);">894513311</a>
<a class="t u" style="left:131.90px;top:1340.09px;font-size:16.6px;color:#38727e;transform:scaleX(1.1832);">7-117476717-</a><a class="t u" style="left:252.71px;top:1340.09px;font-size:16.6px;color:#38727e;transform:scaleX(0.9068);">A-</a><a class="t u" style="left:267.76px;top:1340.09px;font-size:16.6px;color:#38727e;transform:scaleX(0.8775);">G</a>
<span class="t" style="left:526.40px;top:1340.09px;font-size:16.6px;color:#707070;transform:scaleX(0.9000);">G</span>
<span class="t" style="left:646.30px;top:1340.09px;font-size:16.6px;color:#707070;transform:scaleX(1.0750);">chr</span><span class="t" style="left:671.08px;top:1340.09px;font-size:16.6px;color:#707070;transform:scaleX(1.1600);">7</span>
<span class="t" style="left:748.44px;top:1340.09px;font-size:16.6px;color:#707070;transform:scaleX(1.1600);">117476717</span>
<span class="t" style="left:868.44px;top:1340.09px;font-size:16.6px;color:#707070;transform:scaleX(1.1600);">117476717</span>
<span class="t" style="left:989.60px;top:1340.09px;font-size:16.6px;color:#707070;transform:scaleX(0.9300);">A</span>
<span class="t" style="left:1126.60px;top:1340.09px;font-size:16.6px;color:#707070;transform:scaleX(0.9000);">G</span>
<span class="t" style="left:1264.00px;top:1340.09px;font-size:16.6px;color:#707070;transform:scaleX(1.1600);">0</span>
<a class="t u" style="left:1366.09px;top:1340.09px;font-size:16.6px;color:#38727e;transform:scaleX(0.9108);">ENST</a><a class="t u" style="left:1406.40px;top:1340.09px;font-size:16.6px;color:#38727e;transform:scaleX(1.1484);">00000546407.1</a>
<span class="t" style="left:1639.42px;top:1340.09px;font-size:16.6px;color:#707070;transform:scaleX(1.0750);">intron_variant, non_coding_transcr...</span>
<span class="t" style="left:1999.40px;top:1340.09px;font-size:16.6px;color:#707070;transform:scaleX(1.1600);">4.07</span><span class="t" style="left:2036.86px;top:1340.09px;font-size:16.6px;color:#707070;transform:scaleX(1.0750);">e-</span><span class="t" style="left:2052.72px;top:1340.09px;font-size:16.6px;color:#707070;transform:scaleX(1.1600);">4</span>
<a class="t u" style="left:2290.94px;top:1340.09px;font-size:16.6px;color:#38727e;transform:scaleX(1.0589);">rs</a><a class="t u" style="left:2305.58px;top:1340.09px;font-size:16.6px;color:#38727e;transform:scaleX(1.1426);">1343695738</a>
<a class="t u" style="left:131.90px;top:1367.96px;font-size:16.6px;color:#38727e;transform:scaleX(1.1832);">7-117476733-</a><a class="t u" style="left:252.71px;top:1367.96px;font-size:16.6px;color:#38727e;transform:scaleX(0.9068);">A-</a><a class="t u" style="left:267.76px;top:1367.96px;font-size:16.6px;color:#38727e;transform:scaleX(0.8287);">C</a>
<span class="t" style="left:526.40px;top:1367.96px;font-size:16.6px;color:#707070;transform:scaleX(0.9000);">G</span>
<span class="t" style="left:646.30px;top:1367.96px;font-size:16.6px;color:#707070;transform:scaleX(1.0750);">chr</span><span class="t" style="left:671.08px;top:1367.96px;font-size:16.6px;color:#707070;transform:scaleX(1.1600);">7</span>
<span class="t" style="left:748.44px;top:1367.96px;font-size:16.6px;color:#707070;transform:scaleX(1.1600);">117476733</span>
<span class="t" style="left:868.44px;top:1367.96px;font-size:16.6px;color:#707070;transform:scaleX(1.1600);">117476733</span>
<span class="t" style="left:989.60px;top:1367.96px;font-size:16.6px;color:#707070;transform:scaleX(0.9300);">A</span>
<span class="t" style="left:1126.60px;top:1367.96px;font-size:16.6px;color:#707070;transform:scaleX(0.8500);">C</span>
<span class="t" style="left:1264.00px;top:1367.96px;font-size:16.6px;color:#707070;transform:scaleX(1.1600);">0</span>
<a class="t u" style="left:1366.09px;top:1367.96px;font-size:16.6px;color:#38727e;transform:scaleX(0.9108);">ENST</a><a class="t u" style="left:1406.40px;top:1367.96px;font-size:16.6px;color:#38727e;transform:scaleX(1.1484);">00000546407.1</a>
<span class="t" style="left:1639.42px;top:1367.96px;font-size:16.6px;color:#707070;transform:scaleX(1.0750);">intron_variant, non_coding_transcr...</span>
<span class="t" style="left:1999.40px;top:1367.96px;font-size:16.6px;color:#707070;transform:scaleX(1.1600);">8.16</span><span class="t" style="left:2036.86px;top:1367.96px;font-size:16.6px;color:#707070;transform:scaleX(1.0750);">e-</span><span class="t" style="left:2052.72px;top:1367.96px;font-size:16.6px;color:#707070;transform:scaleX(1.1600);">4</span>
<a class="t u" style="left:2290.94px;top:1367.96px;font-size:16.6px;color:#38727e;transform:scaleX(1.0589);">rs</a><a class="t u" style="left:2305.58px;top:1367.96px;font-size:16.6px;color:#38727e;transform:scaleX(1.1426);">1797896358</a>
<a class="t u" style="left:131.90px;top:1395.83px;font-size:16.6px;color:#38727e;transform:scaleX(1.1832);">7-117476905-</a><a class="t u" style="left:252.71px;top:1395.83px;font-size:16.6px;color:#38727e;transform:scaleX(0.8775);">G-</a><a class="t u" style="left:268.89px;top:1395.83px;font-size:16.6px;color:#38727e;transform:scaleX(0.9068);">A</a>
<span class="t" style="left:526.40px;top:1395.83px;font-size:16.6px;color:#707070;transform:scaleX(0.9000);">G</span>
<span class="t" style="left:646.30px;top:1395.83px;font-size:16.6px;color:#707070;transform:scaleX(1.0750);">chr</span><span class="t" style="left:671.08px;top:1395.83px;font-size:16.6px;color:#707070;transform:scaleX(1.1600);">7</span>
<span class="t" style="left:748.44px;top:1395.83px;font-size:16.6px;color:#707070;transform:scaleX(1.1600);">117476905</span>
<span class="t" style="left:868.44px;top:1395.83px;font-size:16.6px;color:#707070;transform:scaleX(1.1600);">117476905</span>
<span class="t" style="left:989.60px;top:1395.83px;font-size:16.6px;color:#707070;transform:scaleX(0.9000);">G</span>
<span class="t" style="left:1126.60px;top:1395.83px;font-size:16.6px;color:#707070;transform:scaleX(0.9300);">A</span>
<span class="t" style="left:1264.00px;top:1395.83px;font-size:16.6px;color:#707070;transform:scaleX(1.1600);">0</span>
<a class="t u" style="left:1366.09px;top:1395.83px;font-size:16.6px;color:#38727e;transform:scaleX(0.9108);">ENST</a><a class="t u" style="left:1406.40px;top:1395.83px;font-size:16.6px;color:#38727e;transform:scaleX(1.1484);">00000546407.1</a>
<span class="t" style="left:1639.42px;top:1395.83px;font-size:16.6px;color:#707070;transform:scaleX(1.0750);">intron_variant, non_coding_transcr...</span>
<span class="t" style="left:1998.24px;top:1395.83px;font-size:16.6px;color:#707070;transform:scaleX(1.1600);">1.28</span><span class="t" style="left:2035.70px;top:1395.83px;font-size:16.6px;color:#707070;transform:scaleX(1.0750);">e-</span><span class="t" style="left:2051.56px;top:1395.83px;font-size:16.6px;color:#707070;transform:scaleX(1.1600);">3</span>
<a class="t u" style="left:2290.94px;top:1395.83px;font-size:16.6px;color:#38727e;transform:scaleX(1.0589);">rs</a><a class="t u" style="left:2305.58px;top:1395.83px;font-size:16.6px;color:#38727e;transform:scaleX(1.1426);">777391096</a>
<a class="t u" style="left:131.90px;top:1423.70px;font-size:16.6px;color:#38727e;transform:scaleX(1.1832);">7-117476920-</a><a class="t u" style="left:252.71px;top:1423.70px;font-size:16.6px;color:#38727e;transform:scaleX(0.9068);">A</a><a class="t u" style="left:262.75px;top:1423.70px;font-size:16.6px;color:#38727e;transform:scaleX(0.9945);">T</a><a class="t u" style="left:272.83px;top:1423.70px;font-size:16.6px;color:#38727e;transform:scaleX(0.9068);">A</a><a class="t u" style="left:282.86px;top:1423.70px;font-size:16.6px;color:#38727e;transform:scaleX(0.8287);">CC-</a><a class="t u" style="left:307.31px;top:1423.70px;font-size:16.6px;color:#38727e;transform:scaleX(0.9068);">A</a>
<span class="t" style="left:526.40px;top:1423.70px;font-size:16.6px;color:#707070;transform:scaleX(0.9000);">G</span>
<span class="t" style="left:646.30px;top:1423.70px;font-size:16.6px;color:#707070;transform:scaleX(1.0750);">chr</span><span class="t" style="left:671.08px;top:1423.70px;font-size:16.6px;color:#707070;transform:scaleX(1.1600);">7</span>
<span class="t" style="left:748.44px;top:1423.70px;font-size:16.6px;color:#707070;transform:scaleX(1.1600);">117476920</span>
<span class="t" style="left:868.44px;top:1423.70px;font-size:16.6px;color:#707070;transform:scaleX(1.1600);">117476923</span>
<span class="t" style="left:989.60px;top:1423.70px;font-size:16.6px;color:#707070;transform:scaleX(0.9300);">A</span><span class="t" style="left:999.89px;top:1423.70px;font-size:16.6px;color:#707070;transform:scaleX(1.0200);">T</span><span class="t" style="left:1010.23px;top:1423.70px;font-size:16.6px;color:#707070;transform:scaleX(0.9300);">A</span><span class="t" style="left:1020.53px;top:1423.70px;font-size:16.6px;color:#707070;transform:scaleX(0.8500);">CC</span>
<span class="t" style="left:1126.60px;top:1423.70px;font-size:16.6px;color:#707070;transform:scaleX(0.9300);">A</span>
<span class="t" style="left:1264.00px;top:1423.70px;font-size:16.6px;color:#707070;transform:scaleX(1.1600);">3</span>
<a class="t u" style="left:1366.09px;top:1423.70px;font-size:16.6px;color:#38727e;transform:scaleX(0.9108);">ENST</a><a class="t u" style="left:1406.40px;top:1423.70px;font-size:16.6px;color:#38727e;transform:scaleX(1.1484);">00000546407.1</a>
<span class="t" style="left:1639.42px;top:1423.70px;font-size:16.6px;color:#707070;transform:scaleX(1.0750);">intron_variant, non_coding_transcr...</span>
<span class="t" style="left:1999.40px;top:1423.70px;font-size:16.6px;color:#707070;transform:scaleX(1.1600);">7.64</span><span class="t" style="left:2036.86px;top:1423.70px;font-size:16.6px;color:#707070;transform:scaleX(1.0750);">e-</span><span class="t" style="left:2052.72px;top:1423.70px;font-size:16.6px;color:#707070;transform:scaleX(1.1600);">3</span>
<a class="t u" style="left:2290.94px;top:1423.70px;font-size:16.6px;color:#38727e;transform:scaleX(1.0589);">rs</a><a class="t u" style="left:2305.58px;top:1423.70px;font-size:16.6px;color:#38727e;transform:scaleX(1.1426);">554857287</a>
<a class="t u" style="left:131.90px;top:1451.57px;font-size:16.6px;color:#38727e;transform:scaleX(1.1832);">7-117476955-</a><a class="t u" style="left:252.71px;top:1451.57px;font-size:16.6px;color:#38727e;transform:scaleX(0.9945);">T-</a><a class="t u" style="left:267.38px;top:1451.57px;font-size:16.6px;color:#38727e;transform:scaleX(0.8287);">C</a>
<span class="t" style="left:526.40px;top:1451.57px;font-size:16.6px;color:#707070;transform:scaleX(0.9000);">G</span>
<span class="t" style="left:646.30px;top:1451.57px;font-size:16.6px;color:#707070;transform:scaleX(1.0750);">chr</span><span class="t" style="left:671.08px;top:1451.57px;font-size:16.6px;color:#707070;transform:scaleX(1.1600);">7</span>
<span class="t" style="left:748.44px;top:1451.57px;font-size:16.6px;color:#707070;transform:scaleX(1.1600);">117476955</span>
<span class="t" style="left:868.44px;top:1451.57px;font-size:16.6px;color:#707070;transform:scaleX(1.1600);">117476955</span>
<span class="t" style="left:989.60px;top:1451.57px;font-size:16.6px;color:#707070;transform:scaleX(1.0200);">T</span>
<span class="t" style="left:1126.60px;top:1451.57px;font-size:16.6px;color:#707070;transform:scaleX(0.8500);">C</span>
<span class="t" style="left:1264.00px;top:1451.57px;font-size:16.6px;color:#707070;transform:scaleX(1.1600);">0</span>
<a class="t u" style="left:1366.09px;top:1451.57px;font-size:16.6px;color:#38727e;transform:scaleX(0.9108);">ENST</a><a class="t u" style="left:1406.40px;top:1451.57px;font-size:16.6px;color:#38727e;transform:scaleX(1.1484);">00000546407.1</a>
<span class="t" style="left:1639.42px;top:1451.57px;font-size:16.6px;color:#707070;transform:scaleX(1.0750);">intron_variant, non_coding_transcr...</span>
<span class="t" style="left:1999.40px;top:1451.57px;font-size:16.6px;color:#707070;transform:scaleX(1.1600);">4.12</span><span class="t" style="left:2036.86px;top:1451.57px;font-size:16.6px;color:#707070;transform:scaleX(1.0750);">e-</span><span class="t" style="left:2052.72px;top:1451.57px;font-size:16.6px;color:#707070;transform:scaleX(1.1600);">4</span>
<a class="t u" style="left:2290.94px;top:1451.57px;font-size:16.6px;color:#38727e;transform:scaleX(1.0589);">rs</a><a class="t u" style="left:2305.58px;top:1451.57px;font-size:16.6px;color:#38727e;transform:scaleX(1.1426);">554145287</a>
</div>
<div class="tip"></div>
<span class="t" style="left:8.00px;top:1426.60px;font-size:20.2px;color:#444;transform:scaleX(1.0040);z-index:11;">czechgenome.cz</span>
</body></html>
